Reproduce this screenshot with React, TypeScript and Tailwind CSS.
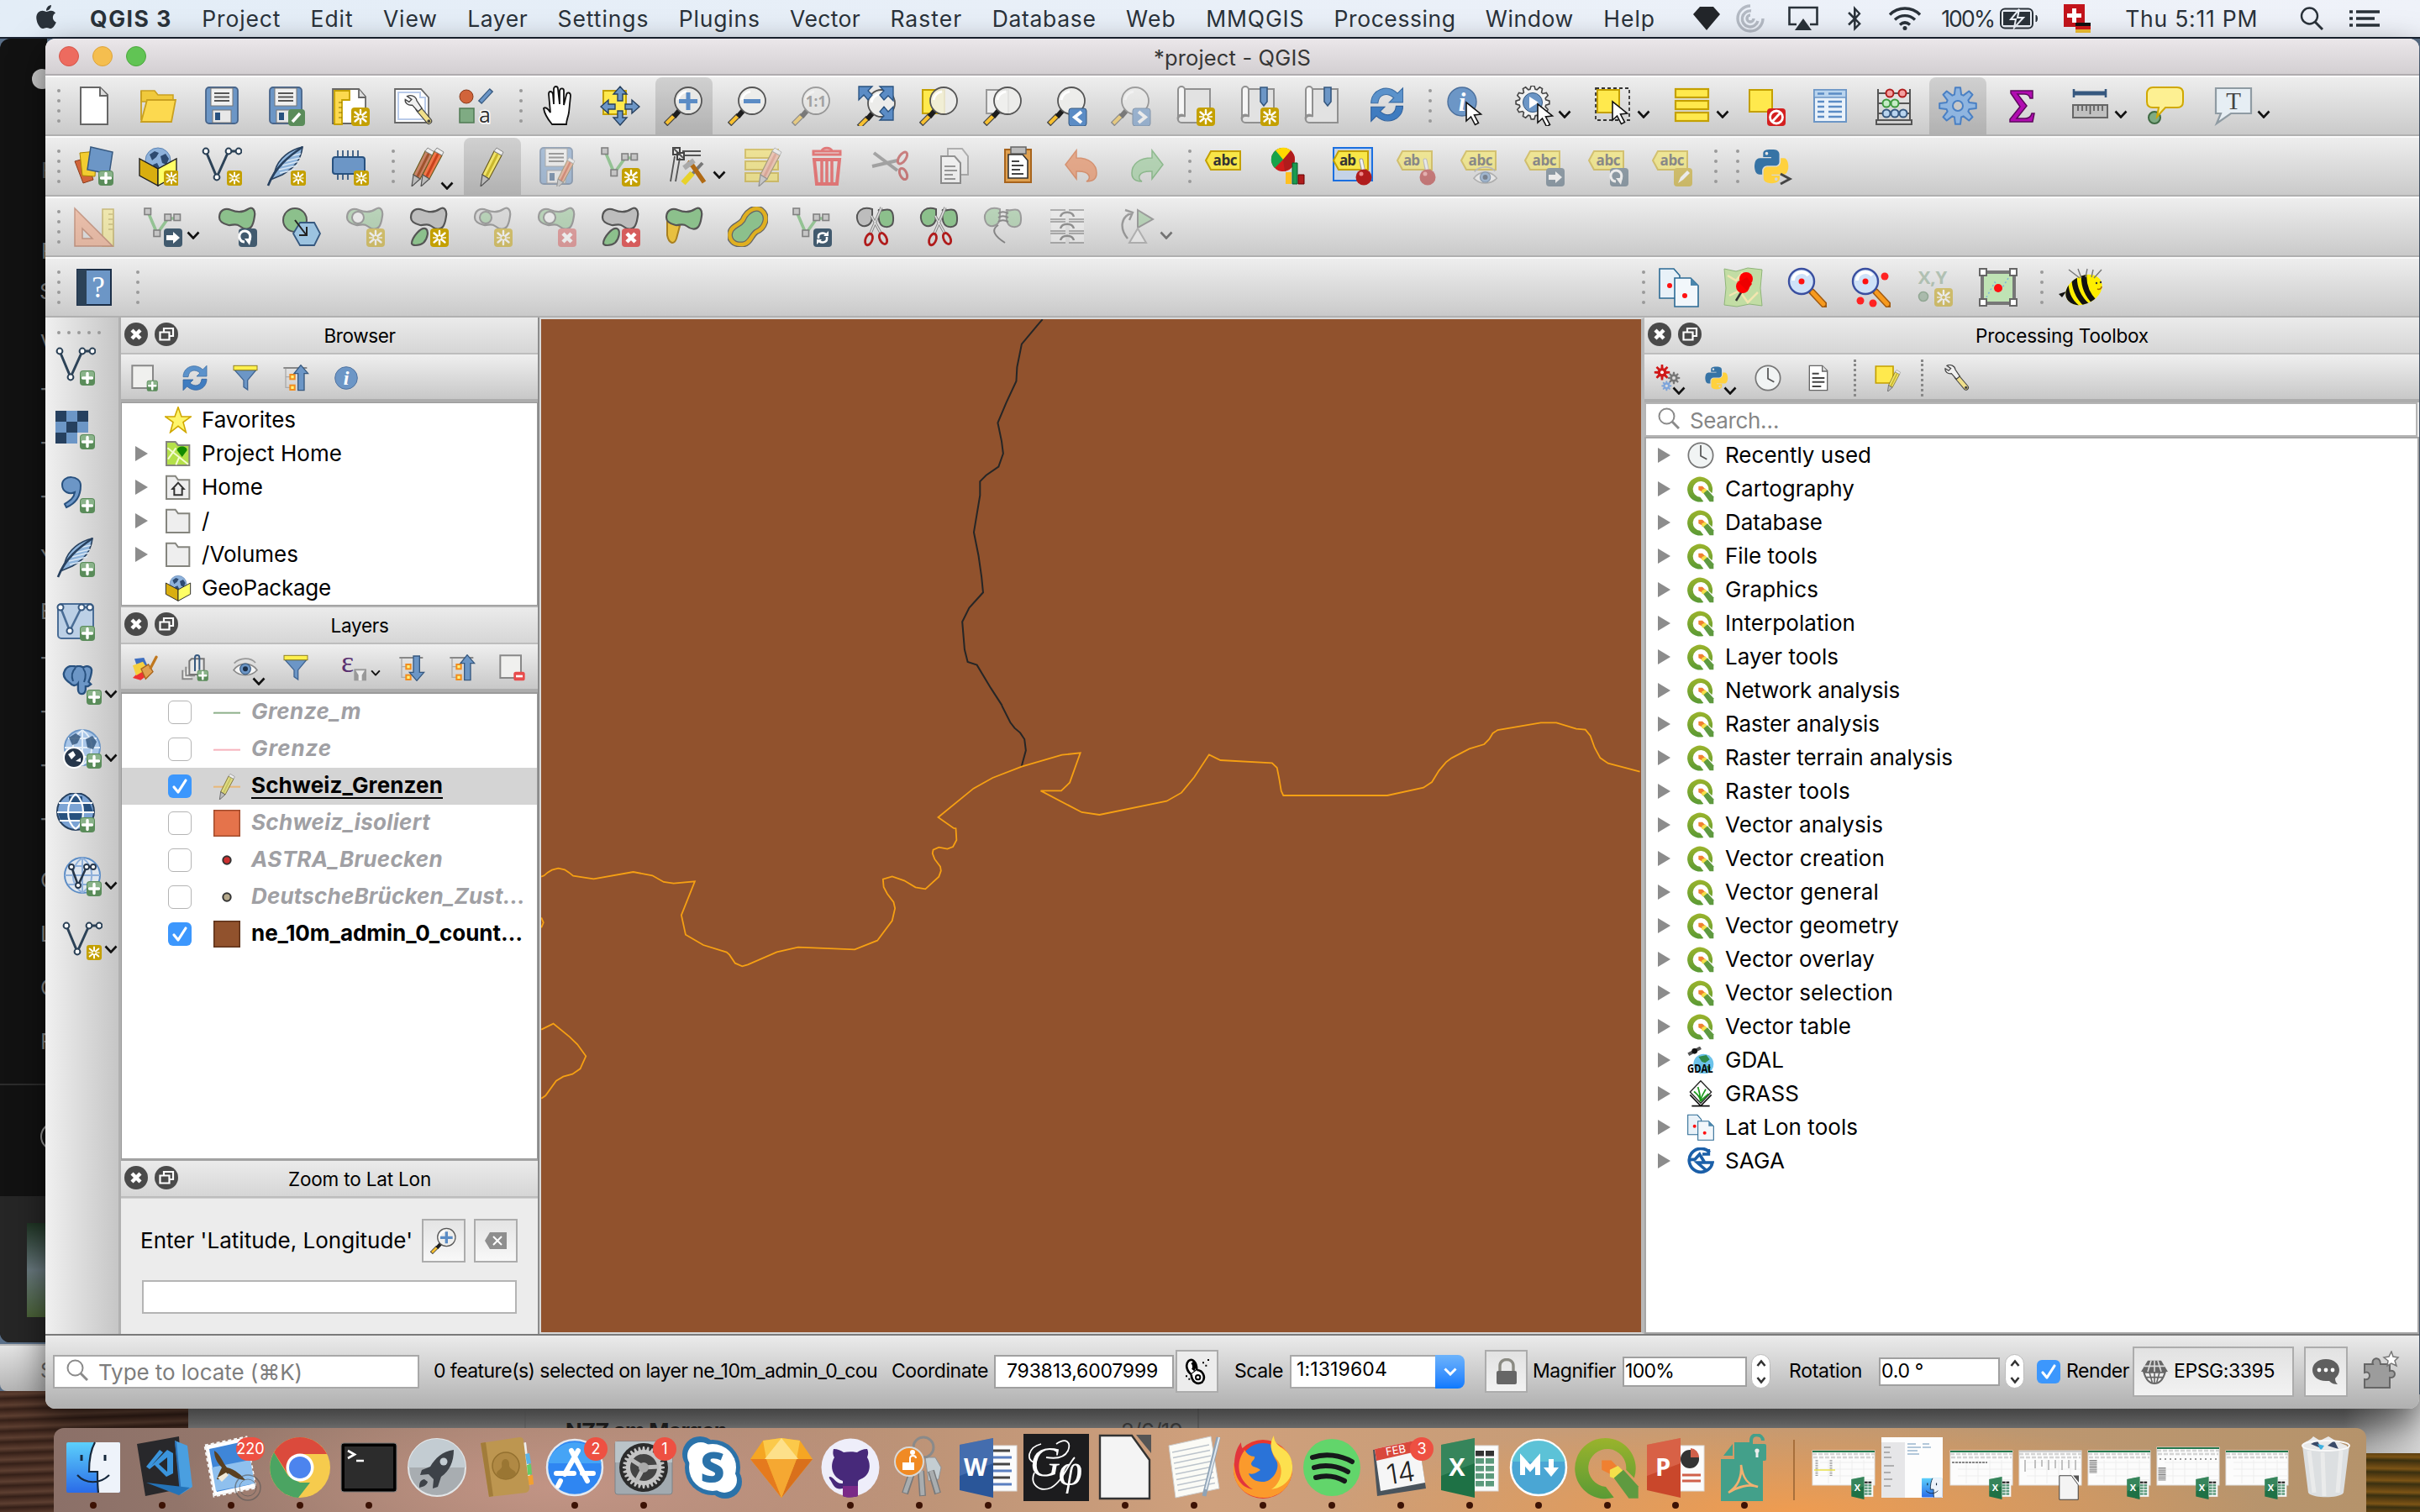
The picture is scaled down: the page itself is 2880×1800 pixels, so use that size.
import React, { useLayoutEffect, useRef } from "react";
import { FaApple, FaBluetoothB } from "react-icons/fa";

type Kids = { children?: React.ReactNode };

/* ---------- text fitted to a known advance width ---------- */
function Fit({ t, w, c = "" }: { t: string; w: number; c?: string }) {
  const ref = useRef<HTMLSpanElement>(null);
  useLayoutEffect(() => {
    const el = ref.current;
    if (!el) return;
    el.style.letterSpacing = "0px";
    const natural = el.getBoundingClientRect().width;
    el.style.letterSpacing = `${(w + 3 - natural) / t.length}px`;
  }, [t, w]);
  return (
    <span ref={ref} className={`inline-block shrink-0 whitespace-pre ${c}`}>
      {t}
    </span>
  );
}

/* ---------- icon primitives ---------- */
function Ico({ children, c = "size-12" }: Kids & { c?: string }) {
  return (
    <svg viewBox="0 0 48 48" className={`shrink-0 ${c}`} fill="none">
      {children}
    </svg>
  );
}

function gear(cx: number, cy: number, ro: number, ri: number, n: number) {
  const pts: string[] = [];
  for (let i = 0; i < n; i++) {
    const a = (i / n) * Math.PI * 2 - Math.PI / 2;
    const s = Math.PI / n;
    [[-0.75, ri], [-0.35, ro], [0.35, ro], [0.75, ri]].forEach(([k, r]) => {
      pts.push(`${(cx + r * Math.cos(a + k * s)).toFixed(2)},${(cy + r * Math.sin(a + k * s)).toFixed(2)}`);
    });
  }
  return pts.join(" ");
}

const Star = ({ x = 26, y = 26 }) => (
  <g transform={`translate(${x} ${y})`}>
    <rect width="22" height="22" rx="4" fill="#c4a000" />
    <path d="M11 3v16M4.5 5.5l13 11M4.5 16.5l13-11" stroke="#fff" strokeWidth="2.4" strokeLinecap="round" />
    <path d="M3 11h16" stroke="#fff" strokeWidth="1.4" />
    <circle cx="11" cy="11" r="2" fill="#c4a000" />
  </g>
);
const Plus = ({ x = 29, y = 29, s = 1 }) => (
  <g transform={`translate(${x} ${y}) scale(${s})`}>
    <rect width="18" height="18" rx="4" fill="#5a8c5a" />
    <rect x="1" y="1" width="16" height="8" rx="3" fill="#8ab38a" />
    <path d="M9 3.5v11M3.5 9h11" stroke="#fff" strokeWidth="3.4" strokeLinecap="round" />
  </g>
);
const Cross = () => (
  <g transform="translate(26 26)">
    <rect width="22" height="22" rx="4" fill="#d65c5c" />
    <path d="M6 6l10 10M16 6L6 16" stroke="#fff" strokeWidth="4.5" />
  </g>
);
const ArrowBadge = () => (
  <g transform="translate(26 26)">
    <rect width="22" height="22" rx="4" fill="#415a6e" />
    <path d="M3 8h8V4l8 7-8 7v-4H3z" fill="#fff" />
  </g>
);
const RotBadge = () => (
  <g transform="translate(26 26)">
    <rect width="22" height="22" rx="4" fill="#415a6e" />
    <path d="M7 16a6.500 6.500 0 1 1 5-2" stroke="#fff" strokeWidth="3" />
    <path d="M7 12h8l-2 8z" fill="#fff" />
  </g>
);
const SyncBadge = () => (
  <g transform="translate(26 26)">
    <rect width="22" height="22" rx="4" fill="#415a6e" />
    <path d="M6 12V9c0-3 6-5 9-2M16 10v3c0 3-6 5-9 2" stroke="#fff" strokeWidth="2.6" />
    <path d="M12 9h6V3zM10 13H4v6z" fill="#fff" />
  </g>
);
const Lens = ({ body, dim = false }: { body?: React.ReactNode; dim?: boolean }) => (
  <g opacity={dim ? 0.5 : 1}>
    <path d="M2 46l11-11" stroke="#444" strokeWidth="6.5" />
    <path d="M3 45l9-9" stroke="#f7c030" strokeWidth="4" />
    <path d="M12 37l7-8" stroke="#1d1d1d" strokeWidth="6" />
    <circle cx="29" cy="18" r="16" fill="#efefec" fillOpacity=".85" stroke="#555" strokeWidth="1.8" />
    <path d="M17 17a12 12 0 0 1 10-10" stroke="#fff" strokeWidth="3" />
    {body}
  </g>
);
const Pointer = ({ x = 22, y = 20 }) => (
  <path transform={`translate(${x} ${y})`} d="M1 1v22l5.5-5 5 9.5 4-2-5-9.5 8-1z" fill="#fff" stroke="#111" strokeWidth="1.6" />
);
const VNodes = ({ c = "#2c4257", soft = false }: { c?: string; soft?: boolean }) =>
  soft ? (
    <>
      <path d="M6 6l11 26L30 14h10" stroke="#8cc08c" strokeWidth="3.6" />
      {[[2, 2], [13, 28], [26, 9], [37, 9]].map(([x, y]) => (
        <rect key={x} x={x} y={y} width="7.5" height="7.5" fill="#c4c4c4" stroke="#777" strokeWidth="1.6" />
      ))}
    </>
  ) : (
    <>
      <path d="M5 6l13 31L32 6h12" stroke={c} strokeWidth="3" />
      {[[5, 6], [18, 37], [32, 6], [44, 6]].map(([x, y]) => (
        <circle key={x} cx={x} cy={y} r="3.4" fill="#fff" stroke={c} strokeWidth="2" />
      ))}
    </>
  );
const Floppy = () => (
  <>
    <rect x="5" y="2" width="38" height="43" rx="4" fill="#6c96c6" stroke="#47648a" strokeWidth="1.8" />
    <rect x="11" y="3" width="26" height="21" fill="#f0f0f0" stroke="#777" />
    <path d="M15 9h18M15 13.500h18M15 18h18" stroke="#555" strokeWidth="1.8" />
    <rect x="13" y="29" width="22" height="15" fill="#e8e8e8" stroke="#777" />
    <rect x="16" y="32" width="6" height="9" fill="#28517f" />
  </>
);
const Pencil = ({ x = 0, a = "#f0e36a", b = "#c9b72e", op = 1 }) => (
  <g transform={`translate(${x} 0)`} opacity={op}>
    <path d="M27 6l9 5-15 28-8-5z" fill={a} stroke="#6b5d20" strokeWidth="1.2" />
    <path d="M31.500 8.500l-14 28" stroke={b} strokeWidth="3" />
    <path d="M27 6l3-4 8 5-2 4z" fill="#eee" stroke="#888" strokeWidth="1" />
    <path d="M13 34l8 5-10 9z" fill="#bbb" stroke="#555" strokeWidth="1.2" />
  </g>
);
const Feather = () => (
  <>
    <path d="M44 1C30 4 15 14 11 30l-5 10 14-6c14-8 22-17 24-33z" fill="#8fb5dc" stroke="#28415f" strokeWidth="1.6" />
    <path d="M17 32l18-4M16 28l22-5M20 23l20-5M24 18l17-4M29 12l13-3" stroke="#dbe8f5" strokeWidth="1.3" />
    <path d="M44 1C28 12 12 24 3 47" stroke="#28415f" strokeWidth="2.6" />
  </>
);
const GeoBox = () => (
  <>
    <circle cx="24" cy="17" r="15" fill="#8db1da" stroke="#5e85b5" strokeWidth="1" />
    <path d="M14 10l6-4 5 2-3 5-5 4zM27 12l6-3 4 6-3 7-5-2zM18 22l5-2 3 6-4 5z" fill="#2d4a70" />
    <path d="M2 15v20l22 12V27z" fill="#d9ae10" stroke="#222" strokeWidth="1.4" />
    <path d="M46 15v20L24 47V27z" fill="#ffff66" stroke="#222" strokeWidth="1.4" />
  </>
);
const Caret = ({ c = "" }: { c?: string }) => (
  <svg viewBox="0 0 16 10" className={`h-[10px] w-4 shrink-0 ${c}`} fill="none">
    <path d="M1.500 1.500L8 8.500l6.500-7" stroke="#111" strokeWidth="2.6" />
  </svg>
);
const Refresh = () => (
  <>
    <path d="M3 22C3 4 24-4 38 9l7-7v19H27l6-6C24 7 13 10 12 22z" fill="#5b92cb" stroke="#3d6ea5" strokeWidth="1.2" />
    <path d="M45 26c0 18-21 26-35 13l-7 7V27h18l-6 6c9 8 20 5 21-7z" fill="#3f7cc0" stroke="#2f609c" strokeWidth="1.2" />
  </>
);
const Info = ({ x = 20, y = 19, r = 17 }) => (
  <g>
    <circle cx={x} cy={y} r={r} fill="#6c96c6" stroke="#4b6f9c" strokeWidth="1.4" />
    <text x={x} y={y + r * 0.62} textAnchor="middle" fontSize={r * 1.8} fontStyle="italic" fontWeight="700" fill="#fff" fontFamily="Liberation Serif, serif">i</text>
  </g>
);
const Tag = ({ t = "abc" }: { t?: string }) => (
  <g transform="translate(-2 0)">
    <path d="M3 17L9 6h35v22H9z" fill="#f8e648" stroke="#c4a000" strokeWidth="2" />
    <text x={t === "abc" ? 26 : 20} y="23" textAnchor="middle" fontSize="17" fontWeight="700" fill="#333" fontFamily="Open Sans, sans-serif" textLength={t === "abc" ? 29 : 20}>{t}</text>
  </g>
);
const Pin = ({ x = 0 }) => (
  <g transform={`translate(${x} 0)`}>
    <path d="M34 17l3 16" stroke="#999" strokeWidth="5" strokeLinecap="round" />
    <path d="M34 17l3 14" stroke="#f2f2f2" strokeWidth="3" strokeLinecap="round" />
    <circle cx="37" cy="37" r="9.500" fill="#b01c1c" />
    <circle cx="34" cy="33" r="2.500" fill="#e88" />
  </g>
);
const BLOB = "M3 13C3 4 10 1 17 4s14 3 20-1 9 2 8 8-1 9-4 13-9 3-14-1-9 0-13-1S3 19 3 13z";
const Blob = ({ f = "#8cc08c", s = "#555" }) => <path d={BLOB} fill={f} stroke={s} strokeWidth="2.2" />;
const Book = () => (
  <>
    <path d="M12 4h30v40H8a4 4 0 0 1 0-8h4z" fill="#e2e2e2" stroke="#909090" strokeWidth="2" />
    <path d="M4 5a4 4 0 0 1 8 0v32a4 4 0 0 0-8 4z" fill="#f6f6f6" stroke="#909090" strokeWidth="2" />
  </>
);
const Ribbon = () => <path d="M26 2h8v17l-4 5-4-5z" fill="#6c96c6" stroke="#36587f" strokeWidth="1.6" />;
const DocPair = () => (
  <>
    <path d="M1 2h17l7 8v27H1z" fill="#e8f1f8" stroke="#2b6a94" strokeWidth="1.6" />
    <circle cx="13" cy="22" r="3" fill="#f11" />
    <path d="M19 13h19l9 9v25H19z" fill="#f2f7fb" stroke="#2b6a94" strokeWidth="1.6" />
    <path d="M38 13v9h9z" fill="#4a86ad" />
    <circle cx="31" cy="34" r="3" fill="#f11" />
  </>
);
const BlueLens = () => (
  <>
    <path d="M30 29l15 16" stroke="#a05a10" strokeWidth="8" strokeLinecap="round" />
    <path d="M31 30l13 14" stroke="#f79a1e" strokeWidth="5" strokeLinecap="round" />
    <circle cx="18" cy="17" r="15" fill="#cfe2f8" stroke="#3a4fa0" strokeWidth="2.400" />
    <path d="M8 16a10 10 0 0 1 18-6" stroke="#fff" strokeWidth="4" />
    <circle cx="18" cy="17" r="3.500" fill="#f11" />
  </>
);
const Python = () => (
  <g transform="translate(2 1) scale(.09)">
    <path fill="#3673a5" d="M167.800 248.100h106.800c29.700 0 53.400-24.500 53.400-54.300V91.900c0-29-24.400-50.700-53.400-55.600-35.800-5.900-74.700-5.600-106.800.1-45.200 8-53.400 24.700-53.400 55.600v40.700h106.900v13.600h-147c-31.100 0-58.300 18.700-66.800 54.200-9.800 40.700-10.200 66.100 0 108.600 7.600 31.600 25.700 54.200 56.800 54.200H101v-48.800c0-35.300 30.500-66.400 66.800-66.400zm-6.700-142.600c-11.100 0-20.100-9.100-20.100-20.300.1-11.300 9-20.400 20.100-20.400 11 0 20.100 9.200 20.100 20.400s-9 20.300-20.100 20.300z" />
    <path fill="#ffd13e" d="M439.800 200.500c-7.700-30.900-22.300-54.200-53.400-54.200h-40.100v47.400c0 36.800-31.200 67.800-66.800 67.800H172.700c-29.200 0-53.400 25-53.400 54.300v101.800c0 29 25.200 46 53.400 54.300 33.800 9.900 66.300 11.700 106.800 0 26.900-7.800 53.400-23.500 53.400-54.300v-40.700H226.200v-13.600h160.200c31.100 0 42.600-21.700 53.400-54.200 11.200-33.500 10.700-65.700 0-108.600zM286.200 404c11.100 0 20.100 9.100 20.100 20.300 0 11.300-9 20.400-20.100 20.400-11 0-20.100-9.200-20.100-20.400.1-11.300 9.100-20.300 20.100-20.300z" />
  </g>
);
const Wrench = () => (
  <>
    <path d="M24 22l16 19" stroke="#444" strokeWidth="10" strokeLinecap="round" />
    <path d="M24 22l16 19" stroke="#f0df8a" strokeWidth="7" strokeLinecap="round" />
    <circle cx="40" cy="41" r="2.500" fill="#444" />
    <path d="M6 2c6-3 14 0 15 7l8 12-6 5-9-10C8 17 2 13 3 7l6 4 4-4z" fill="#f1f1f1" stroke="#444" strokeWidth="1.8" />
  </>
);
const Funnel = () => (
  <>
    <path d="M5 10h38L28 28v17l-7-5V28z" fill="#6c96c6" stroke="#3f6492" strokeWidth="2" />
    <rect x="3" y="2" width="42" height="8" fill="#fff04d" stroke="#8f8020" strokeWidth="1.5" />
  </>
);
const TreeBars = () => (
  <>
    <path d="M2 6h42" stroke="#888" strokeWidth="3" />
    <path d="M6 7v34h8M6 22h8" stroke="#aaa" strokeWidth="2" />
    <rect x="14" y="18" width="8" height="8" fill="#fff27a" stroke="#f28c1e" strokeWidth="3" />
    <rect x="14" y="37" width="8" height="8" fill="#fff27a" stroke="#f28c1e" strokeWidth="3" />
  </>
);
const CollapseI = () => (<><TreeBars /><path d="M33 1l13 15h-7v30H28V16h-7z" fill="#6c96c6" stroke="#36587f" strokeWidth="2" /></>);
const ExpandI = () => (<><TreeBars /><path d="M33 47L20 32h7V3h11v29h8z" fill="#6c96c6" stroke="#36587f" strokeWidth="2" /></>);
const Clock = () => (
  <>
    <circle cx="24" cy="24" r="22" fill="#f1f4f4" stroke="#777" strokeWidth="2.600" />
    <path d="M24 6v19l11 6" stroke="#555" strokeWidth="2.600" />
  </>
);
const QLogo = ({ id }: { id: string }) => (
  <>
    <defs>
      <linearGradient id={id} x1="0" y1="0" x2="0" y2="1">
        <stop offset="0" stopColor="#9ab32c" />
        <stop offset="1" stopColor="#5a9a35" />
      </linearGradient>
    </defs>
    <path d="M44 32A22.500 22.500 0 1 0 29 46.500l-6-8A14 14 0 1 1 38 26z" fill={`url(#${id})`} />
    <path d="M20 19h7l5 5v8l-4-2-8-4z" fill="#f08030" />
    <path d="M26 26l6-3 5 5-6 5-5-2z" fill="#f3e04a" />
    <path d="M29 32l7-6 11 12v9h-7z" fill="#5f9a40" />
  </>
);
const Globe = ({ f = "#7ba3d4", s = "#3c679b", l = "#e4eef8" }) => (
  <>
    <circle cx="24" cy="22" r="21" fill={f} stroke={s} strokeWidth="2" />
    <path d="M24 1v42M3 22h42M7 11h34M7 33h34M24 1C9 12 9 32 24 43M24 1c15 11 15 31 0 42" stroke={l} strokeWidth="2" />
  </>
);
const Eye = () => (
  <>
    <path d="M3 28C13 14 34 13 45 28 34 40 14 40 3 28z" fill="#f4f4f4" stroke="#888" strokeWidth="2.400" />
    <path d="M4 16C14 5 34 5 42 15" stroke="#999" strokeWidth="2.600" />
    <circle cx="24" cy="26" r="9.500" fill="#6c96c6" stroke="#36587f" strokeWidth="1.6" />
    <circle cx="24" cy="26" r="4.500" fill="#1c2f48" />
  </>
);
const Paper = ({ children }: Kids) => (
  <>
    <path d="M8 2h23l9 9v35H8z" fill="#fff" stroke="#666" strokeWidth="2" />
    <path d="M31 2v10h9" fill="#ddd" stroke="#666" strokeWidth="2" />
    {children}
  </>
);
const Scissors = ({ left }: { left: string }) => (
  <>
    <path d="M20 3C8-1 1 6 2 14s7 11 13 8 5-12 5-19z" fill={left} stroke="#555" strokeWidth="2" />
    <path d="M27 4c5 2 9-2 14 0s5 15 2 18-10 3-13-1-3-12-1-17z" fill="#8cc08c" stroke="#555" strokeWidth="2" />
    <path d="M31 1L17 34M19 11l12 22" stroke="#888" strokeWidth="3.400" />
    <path d="M31 1L17 34M19 11l12 22" stroke="#e4e4e4" strokeWidth="1.400" />
    <ellipse cx="16" cy="39" rx="4" ry="7" transform="rotate(20 16 39)" stroke="#b01c1c" strokeWidth="2.800" />
    <ellipse cx="33" cy="38" rx="4" ry="7" transform="rotate(-25 33 38)" stroke="#b01c1c" strokeWidth="2.800" />
  </>
);

/* ---------- toolbar pieces ---------- */
function Grip({ c = "w-[18px]" }: { c?: string }) {
  return (
    <div className={`flex h-full shrink-0 flex-col items-end justify-center gap-2 pr-[2px] ${c}`}>
      {[0, 1, 2, 3].map((i) => (
        <span key={i} className="size-1 rounded-full bg-[#9a9a9a]" />
      ))}
    </div>
  );
}
function Btn({ children, on = false, dim = false }: Kids & { on?: boolean; dim?: boolean }) {
  return (
    <div className="flex h-full w-[76px] shrink-0 items-center justify-center">
      <div className={`flex h-full w-[68px] items-center justify-center ${on ? "rounded-t-lg bg-black/12" : ""}`}>
        <Ico c={dim ? "size-12 opacity-50" : "size-12"}>{children}</Ico>
      </div>
    </div>
  );
}
function Drop({ children, dim = false }: Kids & { dim?: boolean }) {
  return (
    <div className={`flex h-full w-[94px] shrink-0 items-center pl-5 ${dim ? "opacity-50" : ""}`}>
      <Ico>{children}</Ico>
      <Caret c="ml-[4px] mt-5" />
    </div>
  );
}
function Bar({ children }: Kids) {
  return (
    <div className="flex h-[72px] shrink-0 items-stretch border-t-2 border-b-2 border-t-[#fafafa] border-b-[#b0b0b0] bg-linear-to-b from-[#eeeeee] to-[#cacaca]">
      {children}
    </div>
  );
}

function Toolbars() {
  return (
    <div className="flex shrink-0 flex-col">
      <Bar>
        <Grip c="w-5" />
        <Btn><Paper /></Btn>
        <Btn>
          <path d="M4 6h16l4 5h18v8H4z" fill="#f0c93c" stroke="#c9a020" strokeWidth="1.5" />
          <path d="M4 41V6M11 17h34l-5 26H4z" fill="#fcd94f" stroke="#c9a020" strokeWidth="1.800" />
        </Btn>
        <Btn><Floppy /></Btn>
        <Btn><Floppy /><rect x="27" y="28" width="20" height="20" rx="4" fill="#5a8c5a" /><path d="M32 43l9-10" stroke="#fff" strokeWidth="3.500" /></Btn>
        <Btn>
          <path d="M4 4h31l8 9v32H4z" fill="#fff" stroke="#666" strokeWidth="1.800" /><path d="M35 4v10h8" fill="#ddd" stroke="#666" strokeWidth="1.8" />
          <path d="M6 6h18v11h-9v29H6z" fill="#fcd94f" stroke="#c4a000" strokeWidth="1.800" />
          <path d="M11 20h4M11 26h4M11 32h4M11 38h4" stroke="#8a7000" /><Star />
        </Btn>
        <Btn>
          <path d="M2 4h31l9 10v30H2z" fill="#fff" stroke="#666" strokeWidth="1.800" />
          <path d="M6 8h26v6h6v26H6z" stroke="#b9cbea" strokeWidth="2" />
          <g transform="translate(12 11) scale(.76)"><Wrench /></g>
        </Btn>
        <Btn>
          <circle cx="11" cy="13" r="8" fill="#d1643a" stroke="#8a3c1c" />
          <path d="M41 5L27 20" stroke="#36587f" strokeWidth="6" /><path d="M40 6L28 19" stroke="#6c96c6" strokeWidth="3.500" />
          <rect x="3" y="27" width="17" height="17" fill="#7fab83" stroke="#4f7a53" strokeWidth="1.500" />
          <text x="26" y="44" fontSize="25" fill="#333" stroke="#fff" strokeWidth="3" paintOrder="stroke" fontFamily="Open Sans, sans-serif">a</text>
        </Btn>
        <Grip />
        <Btn>
          <path transform="translate(5 0)" d="M14 46c-5-6-9-12-10-19 2-2 5 0 8 5L10 10c0-4 4-4 5 0l1 12V4c0-4 5-4 5 0l2 18V6c1-4 5-3 5 0v17l3-12c1-4 5-3 5 1l-2 20c-1 6-3 9-3 14z" fill="#fff" stroke="#111" strokeWidth="1.800" />
        </Btn>
        <Btn>
          <rect x="4" y="6" width="27" height="28" fill="#ffe94d" stroke="#c4a000" strokeWidth="2" />
          <path d="M24 1l8 9h-5v8h-6v-8h-5zM24 47l8-9h-5v-8h-6v8h-5zM1 25l9-8v5h8v6h-8v5zM47 25l-9-8v5h-8v6h8v5z" fill="#6c96c6" stroke="#28415f" strokeWidth="1.400" />
        </Btn>
        <Btn on><Lens body={<path d="M29 8v21M18 18.500h22" stroke="#5b8cc5" strokeWidth="5" />} /></Btn>
        <Btn><Lens body={<path d="M19 18.500h20" stroke="#5b8cc5" strokeWidth="5" />} /></Btn>
        <Btn><Lens dim body={<text x="29" y="25" textAnchor="middle" fontSize="17" fontWeight="700" fill="#666" fontFamily="Open Sans, sans-serif">1:1</text>} /></Btn>
        <Btn>
          <g transform="translate(2 3)"><Lens /></g>
          <path d="M4 1h16l-5 5 5 5-5 6-5-6-6 6zM45 1v17l-6-6-5 5-5-6 5-5-5-5zM45 41H29l5-5-5-5 5-6 5 6 6-6z" fill="#5b8cc5" stroke="#28517f" strokeWidth="1.300" />
        </Btn>
        <Btn><rect x="4" y="5" width="26" height="28" fill="#ffe94d" stroke="#c4a000" strokeWidth="2" /><Lens /></Btn>
        <Btn><rect x="4" y="5" width="26" height="28" fill="#eee" stroke="#999" strokeWidth="2" /><Lens /></Btn>
        <Btn><Lens /><rect x="26" y="27" width="21" height="21" rx="3" fill="#5b8cc5" stroke="#36587f" /><path d="M41 31l-8 6.500 8 6.500" stroke="#fff" strokeWidth="4" /></Btn>
        <Btn dim><Lens /><rect x="26" y="27" width="21" height="21" rx="3" fill="#5b8cc5" stroke="#36587f" /><path d="M33 31l8 6.500-8 6.500" stroke="#fff" strokeWidth="4" /></Btn>
        <Btn><Book /><Star /></Btn>
        <Btn><Book /><Ribbon /><Star /></Btn>
        <Btn><Book /><Ribbon /></Btn>
        <Btn><g transform="translate(3 1) scale(.9)"><Refresh /></g></Btn>
        <Grip />
        <Btn><Info /><Pointer x={24} y={19} /></Btn>
        <Drop>
          <polygon points={gear(22, 20, 20, 16, 12)} fill="#f2f2f2" stroke="#444" strokeWidth="1.600" />
          <circle cx="22" cy="20" r="11.500" fill="#6c96c6" stroke="#36587f" /><path d="M18 13l11 7-11 7z" fill="#fff" /><Pointer x={27} y={21} />
        </Drop>
        <Drop>
          <rect x="3" y="3" width="40" height="38" stroke="#333" strokeWidth="1.800" strokeDasharray="4 3" />
          <rect x="5" y="5" width="26" height="27" fill="#ffe94d" stroke="#c4a000" strokeWidth="2" /><Pointer x={22} y={18} />
        </Drop>
        <Drop>
          {[4, 18, 32].map((y) => <rect key={y} x="4" y={y} width="39" height="10" fill="#ffe94d" stroke="#c4a000" strokeWidth="2.200" />)}
        </Drop>
        <Btn>
          <rect x="4" y="5" width="27" height="26" fill="#ffe94d" stroke="#c4a000" strokeWidth="2" />
          <rect x="25" y="27" width="22" height="21" rx="4" fill="#d42020" /><circle cx="36" cy="37.500" r="7.500" stroke="#fff" strokeWidth="2.800" /><path d="M31 43l10-11" stroke="#fff" strokeWidth="2.800" />
        </Btn>
        <Btn>
          <rect x="5" y="5" width="38" height="38" fill="#eaf2fa" stroke="#6c96c6" strokeWidth="2" /><rect x="5" y="5" width="38" height="9" fill="#b9d4ee" stroke="#6c96c6" strokeWidth="1.500" />
          <path d="M9 9.500h8M22 9.500h16M9 19h8M22 19h16M9 25h8M22 25h16M9 31h8M22 31h16M9 37h8M22 37h16" stroke="#5b8cc5" strokeWidth="2.400" />
        </Btn>
        <Btn>
          <path d="M5 4v37M43 4v37M5 9h38M5 21h38M5 33h38M3 41h42v5H3z" stroke="#555" strokeWidth="2" />
          {[[19, 9, "#f3a0a0", "#b01c1c"], [34, 9, "#f3a0a0", "#b01c1c"], [15, 21, "#c6ecc6", "#3f9a3f"], [25, 21, "#c6ecc6", "#3f9a3f"], [15, 33, "#b9d4ee", "#36587f"], [25, 33, "#b9d4ee", "#36587f"], [35, 33, "#b9d4ee", "#36587f"]].map(([x, y, f, s]) => (
            <circle key={`${x}-${y}`} cx={x} cy={y} r="4.500" fill={String(f)} stroke={String(s)} strokeWidth="2" />
          ))}
        </Btn>
        <Btn on>
          <polygon points={gear(24, 24, 22, 14, 8)} fill="#8fb5e0" stroke="#4a80c4" strokeWidth="2" strokeLinejoin="round" />
          <circle cx="24" cy="24" r="6" fill="#c8c8c8" stroke="#4a80c4" strokeWidth="2" />
        </Btn>
        <Btn><path d="M11 6h26v9h-3c-1-4-3-5-7-5H19l11 14-12 15h10c5 0 7-2 8-6h3l-2 10H10v-3l12-15L11 9z" fill="#b10cb1" stroke="#5e085e" strokeWidth="1.500" /></Btn>
        <Drop>
          <path d="M4 9h38M4 4v10M42 4v10" stroke="#36587f" strokeWidth="2.600" /><path d="M5 9h36" stroke="#36587f" strokeWidth="5" />
          <rect x="3" y="23" width="41" height="15" fill="#c0c0c0" stroke="#666" strokeWidth="2" /><path d="M9 24v6M14 24v6M19 24v6M23.500 24v10M28 24v6M33 24v6M38 24v6" stroke="#555" strokeWidth="1.600" />
        </Drop>
        <Btn>
          <circle cx="12" cy="38" r="7" fill="#7fab83" stroke="#3f6a43" strokeWidth="2" />
          <path d="M10 2h29c5 0 7 3 7 7v10c0 5-3 7-7 7H25L15 37l2-11h-7c-5 0-7-3-7-7V9c0-4 3-7 7-7z" fill="#fdf092" stroke="#d0a800" strokeWidth="2" />
        </Btn>
        <Drop>
          <path d="M3 3h42v30H21L4 45l5-12H3z" fill="#e6eef4" stroke="#8f9ba3" strokeWidth="2.200" />
          <text x="24" y="28" textAnchor="middle" fontSize="29" fill="#444" fontFamily="Liberation Serif, serif">T</text>
        </Drop>
      </Bar>
      <Bar>
        <Grip c="w-5" />
        <Btn>
          <path d="M1 18l14-4 8 26-12 4z" fill="#d1643a" stroke="#8a3c1c" /><path d="M7 8l20-2-2 30-15-1z" fill="#f2cc30" stroke="#a88400" />
          <path d="M20 1l26 6-4 26-26-5z" fill="#6c96c6" stroke="#36587f" strokeWidth="1.500" /><Plus />
        </Btn>
        <Btn><GeoBox /><g transform="translate(31 29) scale(.82)"><Star x={0} y={0} /></g></Btn>
        <Btn><VNodes /><g transform="translate(30 29) scale(.82)"><Star x={0} y={0} /></g></Btn>
        <Btn><Feather /><g transform="translate(30 29) scale(.82)"><Star x={0} y={0} /></g></Btn>
        <Btn>
          <path d="M10 5v9M16 5v9M22 5v9M28 5v9M34 5v9M10 33v7M16 33v7M22 33v7" stroke="#36587f" strokeWidth="1.800" />
          <rect x="4" y="13" width="38" height="20" rx="3" fill="#6c96c6" stroke="#28517f" strokeWidth="2" /><g transform="translate(29 29) scale(.82)"><Star x={0} y={0} /></g>
        </Btn>
        <Grip />
        <div className="flex h-full w-[76px] shrink-0 items-center pl-4">
          <Ico><Pencil x={-9} a="#c88468" b="#a0522d" /><Pencil x={2} a="#f0764a" b="#c8421c" /></Ico>
          <Caret c="-ml-[12px] mt-[46px]" />
        </div>
        <Btn on><Pencil x={-1} /></Btn>
        <Btn dim><Floppy /><g transform="translate(14 12) scale(.8)"><Pencil x={2} a="#e8906a" b="#c8421c" /></g></Btn>
        <Btn><g opacity=".9"><VNodes soft /></g><Star /></Btn>
        <Drop>
          <rect x="5" y="2" width="8" height="8" stroke="#444" strokeWidth="2" /><path d="M5 2l12 12M16 6h22M18 11h20M7 12L2 42M13 14L8 42" stroke="#555" strokeWidth="1.800" />
          <rect x="10" y="8" width="8" height="8" stroke="#444" strokeWidth="2" /><path d="M40 20L18 44" stroke="#777" strokeWidth="4" /><path d="M28 32L17 44" stroke="#e8d22a" strokeWidth="7" />
          <path d="M22 19l6 4 14 20" stroke="#b06a14" strokeWidth="5.500" /><path d="M18 26l12-9" stroke="#aaa" strokeWidth="6" />
        </Drop>
        <Btn dim>
          {[4, 18, 32].map((y) => <rect key={y} x="3" y={y} width="39" height="10" fill="#f6e048" stroke="#c4a000" strokeWidth="2" />)}
          <Pencil x={8} a="#f0a888" b="#d8765a" />
        </Btn>
        <Btn>
          <g opacity=".85"><path d="M8 6h32v4H8zM18 6c0-5 12-5 12 0" stroke="#e06666" strokeWidth="3" /><path d="M9 16h30l-3 29H12z" stroke="#e06666" strokeWidth="4" /><path d="M18 18v26M24 18v26M30 18v26" stroke="#e06666" strokeWidth="3.500" /></g>
        </Btn>
        <Btn dim>
          <path d="M4 8l28 21M2 24l30-7" stroke="#666" strokeWidth="4" /><ellipse cx="38" cy="14" rx="4" ry="8" transform="rotate(35 38 14)" stroke="#b01c1c" strokeWidth="3" /><ellipse cx="39" cy="33" rx="4" ry="7" transform="rotate(-25 39 33)" stroke="#b01c1c" strokeWidth="3" />
        </Btn>
        <Btn dim>
          <path d="M16 3h17l7 9v22H16z" fill="#eee" stroke="#777" strokeWidth="2" /><path d="M8 12h16l7 8v24H8z" fill="#fff" stroke="#444" strokeWidth="2" /><path d="M12 24h13M12 29h15M12 34h10M12 39h13" stroke="#555" strokeWidth="2" />
        </Btn>
        <Btn>
          <rect x="8" y="4" width="31" height="39" fill="#dfa050" stroke="#a8641c" strokeWidth="2" /><rect x="15" y="1" width="18" height="8" fill="#bbb" stroke="#666" strokeWidth="1.500" />
          <path d="M12 10h17l6 7v21H12z" fill="#fff" stroke="#333" strokeWidth="1.600" /><path d="M16 18h9M16 23h14M16 28h10M16 33h14" stroke="#444" strokeWidth="2" />
        </Btn>
        <Btn><g opacity=".65"><path d="M4 22L17 5v9c16 0 24 8 24 18 0 8-6 10-12 10 6-3 5-13-12-12v9z" fill="#e58a5c" stroke="#d06a38" strokeWidth="1.500" /></g></Btn>
        <Btn><g opacity=".65"><path d="M44 22L31 5v9C15 14 7 22 7 32c0 8 6 10 12 10-6-3-5-13 12-12v9z" fill="#9ccb9c" stroke="#63a563" strokeWidth="1.500" /></g></Btn>
        <Grip />
        <Btn><Tag /></Btn>
        <Btn>
          <circle cx="17" cy="16" r="14" fill="#d01c1c" /><path d="M17 16V2A14 14 0 0 0 7 26z" fill="#18a34a" /><path d="M17 16L8 5a14 14 0 0 1 19 1z" fill="#ffd800" /><path d="M17 16l9-11a14 14 0 0 1 0 21l-7 4z" fill="#b01c1c" />
          <path d="M20 31h7v14h-7z" fill="#ffc020" /><path d="M28 20h6v25h-6z" fill="#1a9a50" stroke="#0a5a2c" /><path d="M35 34h7v11h-7z" fill="#b01c1c" stroke="#600" />
        </Btn>
        <Btn><rect x="1" y="2" width="46" height="39" fill="#c5d3e6" stroke="#1a6fe0" strokeWidth="2" /><Tag t="ab" /><Pin /></Btn>
        <Btn dim><Tag t="ab" /><Pin /></Btn>
        <Btn dim><Tag /><g transform="translate(14 20) scale(.65)"><Eye /></g></Btn>
        <Btn dim><Tag /><ArrowBadge /></Btn>
        <Btn dim><Tag /><RotBadge /></Btn>
        <Btn dim><Tag /><rect x="26" y="26" width="22" height="22" rx="4" fill="#c4a000" /><path d="M31 44l3-7 8-8 3 3-8 8z" fill="#fff" /></Btn>
        <Grip />
        <Grip c="w-[26px]" />
        <Btn><Python /><path d="M33 33l11 6-11 6" stroke="#444" strokeWidth="3" /></Btn>
      </Bar>
      <Bar>
        <Grip c="w-5" />
        <Btn dim><path d="M34 3h13v44H34z" fill="#f8e878" stroke="#a88a10" strokeWidth="1.500" /><path d="M41 9h5M41 15h5M41 21h5M41 27h5" stroke="#8a7000" /><path d="M1 2v45h45zM10 26v12h12z" fill="#ef9a72" fillRule="evenodd" stroke="#a8502c" strokeWidth="1.500" /></Btn>
        <Drop><g opacity=".9"><VNodes soft /></g><g transform="translate(-1 0)"><ArrowBadge /></g></Drop>
        <Btn><Blob /><RotBadge /></Btn>
        <Btn>
          <circle cx="17" cy="16" r="14" fill="#8cc08c" stroke="#555" strokeWidth="2" /><path d="M23 19h17l7 13-7 14H23l-8-14z" fill="#9cc3e0" stroke="#36587f" strokeWidth="1.800" /><path d="M17 16l13 17M31 24v10h-9" stroke="#222" strokeWidth="2" />
        </Btn>
        <Btn dim><Blob /><circle cx="16" cy="13" r="7" fill="#eee" stroke="#555" strokeWidth="2" /><Star /></Btn>
        <Btn><Blob f="#bdbdbd" /><path d="M20 26c5 2 3 12-2 17-5 4-15 4-14 0 1-7 10-18 16-17z" fill="#8cc08c" stroke="#555" strokeWidth="2.200" /><Star /></Btn>
        <Btn dim><Blob f="#ccc" /><circle cx="16" cy="13" r="7" fill="#8cc08c" stroke="#555" strokeWidth="2" /><Star /></Btn>
        <Btn dim><Blob /><circle cx="16" cy="13" r="7" fill="#eee" stroke="#555" strokeWidth="2" /><Cross /></Btn>
        <Btn><Blob f="#bdbdbd" /><path d="M20 26c5 2 3 12-2 17-5 4-15 4-14 0 1-7 10-18 16-17z" fill="#8cc08c" stroke="#555" strokeWidth="2.200" /><Cross /></Btn>
        <Btn><path d="M4 16v18c2 10 8 12 11 4l4-15z" fill="#e8c040" stroke="#a88020" strokeWidth="2" /><Blob /></Btn>
        <Btn><path d="M40 4c10 8 4 22-6 26-6 4-7 14-16 15C4 46 0 36 4 28c3-6 10-6 14-12C22 6 32-1 40 4z" fill="#8cc08c" stroke="#666" strokeWidth="7" /><path d="M40 4c10 8 4 22-6 26-6 4-7 14-16 15C4 46 0 36 4 28c3-6 10-6 14-12C22 6 32-1 40 4z" stroke="#e0b020" strokeWidth="4.500" /></Btn>
        <Btn><g opacity=".9"><VNodes soft /></g><SyncBadge /></Btn>
        <Btn><Scissors left="#bdbdbd" /></Btn>
        <Btn><Scissors left="#8cc08c" /></Btn>
        <Btn dim><path d="M20 3C8-1 1 6 2 14s7 11 13 8 5-12 5-19z" fill="#8cc08c" stroke="#555" strokeWidth="2" /><path d="M27 4c5 2 9-2 14 0s5 15 2 18-10 3-13-1-3-12-1-17z" fill="#8cc08c" stroke="#555" strokeWidth="2" /><path d="M18 8c3-2 8-2 12 0M18 13c3-2 8-2 12 0M18 18c3-2 8-2 12 0M18 22c-10 6-3 14 8 21" stroke="#333" strokeWidth="2" /></Btn>
        <Btn dim>{[4, 18, 32].map((y) => <g key={y}><rect x="5" y={y} width="17" height="11" fill="#eee" /><rect x="27" y={y} width="17" height="11" fill="#eee" /><path d={`M4 ${y}h18M26 ${y}h18M4 ${y + 11}h18M26 ${y + 11}h18`} stroke="#777" strokeWidth="2" /><path d={`M16 ${y + 8}c2-7 14-7 16 0`} stroke="#444" strokeWidth="2.500" /></g>)}</Btn>
        <Drop dim><g transform="translate(2 0)"><path d="M12 38C2 26 4 12 16 8M9 4l9 3-4 9" stroke="#555" strokeWidth="2.400" /><path d="M24 4l18 11-18 10z" fill="#8cc08c" stroke="#555" strokeWidth="2" /><path d="M24 26l10 17H14z" fill="#eee" stroke="#888" strokeWidth="2" /></g></Drop>
      </Bar>
      <Bar>
        <Grip c="w-5" />
        <Btn>
          <rect x="4" y="3" width="40" height="42" fill="#6c96c6" stroke="#1c2f48" strokeWidth="2" /><path d="M4 3h11v42H4z" fill="#2c4257" />
          <text x="29" y="36" textAnchor="middle" fontSize="35" fill="#fff" fontFamily="Liberation Serif, serif">?</text>
        </Btn>
        <Grip />
        <div className="w-[1774px] shrink-0" />
        <Grip />
        <Btn><DocPair /></Btn>
        <Btn>
          <path d="M2 2l14 3 14-4 17 2-2 22 2 21-15-2-15 3L2 45l2-20z" fill="#c2dda4" stroke="#8fb57a" /><path d="M6 10l10 6 8-10M8 34l12-6 10 14 12-12" stroke="#f3e6b0" strokeWidth="2.500" />
          <path d="M24 27l-8 13" stroke="#333" strokeWidth="2.500" /><circle cx="28" cy="14" r="8" fill="#f00" /><circle cx="24" cy="23" r="8" fill="#f00" /><path d="M19 18l10-6 6 8-6 8z" fill="#e00" />
        </Btn>
        <Btn><BlueLens /></Btn>
        <Btn><BlueLens />{[[41, 11], [12, 40], [27, 43]].map(([x, y]) => <circle key={x} cx={x} cy={y} r="4.500" fill="#f22" />)}</Btn>
        <Btn dim>
          <text x="22" y="20" textAnchor="middle" fontSize="22" fontWeight="700" fill="#7f9f83" fontFamily="Open Sans, sans-serif">X,Y</text>
          <circle cx="11" cy="35" r="5.500" fill="#7f9f83" stroke="#4f7a53" strokeWidth="1.500" /><Star x={24} y={25} />
        </Btn>
        <Btn>
          <rect x="5" y="6" width="38" height="37" fill="#bfe3b4" stroke="#777" strokeWidth="4" /><path d="M10 36l10-18 8 8 10-16" stroke="#7ab3dd" strokeWidth="1.500" strokeDasharray="2 3" />
          {[[2, 2], [38, 2], [2, 38], [38, 38]].map(([x, y]) => <rect key={`${x}${y}`} x={x} y={y} width="8" height="8" fill="#fff" stroke="#666" strokeWidth="2" />)}
          <circle cx="24" cy="25" r="5" fill="#f11" />
        </Btn>
        <Grip />
        <div className="flex h-full w-[84px] items-center justify-center">
          <svg viewBox="0 0 54 48" className="h-12 w-[54px]" fill="none">
            <defs><clipPath id="beeBody"><ellipse cx="31" cy="27" rx="23" ry="16.500" transform="rotate(-28 31 27)" /></clipPath></defs>
            <path d="M1 32l9-3-5 7z" fill="#111" />
            <g clipPath="url(#beeBody)"><rect width="54" height="48" fill="#ffee00" /><path d="M9 14c0 16 4 26 14 34M20 6c-2 16 4 30 15 40M32 2c-3 16 2 30 12 40" stroke="#111" strokeWidth="6.500" /></g>
            <path d="M26 13L13 3M28 13L24 2M33 12l2-10M40 12l2-9M43 13l9-10" stroke="#777" strokeWidth="1.400" />
            <path d="M47 26c2 1 5 0 5-3" stroke="#a60" strokeWidth="1.500" /><circle cx="46" cy="19" r="1.200" fill="#333" /><circle cx="51" cy="18" r="1.200" fill="#333" />
          </svg>
        </div>
      </Bar>
    </div>
  );
}

/* ---------- left side layer toolbar ---------- */
function SideBtn({ children, drop = false }: Kids & { drop?: boolean }) {
  return (
    <div className={`flex h-[76px] shrink-0 items-center ${drop ? "pl-5" : "pl-3"}`}>
      <Ico>{children}</Ico>
      {drop && <Caret c="ml-[2px] mt-5" />}
    </div>
  );
}
function SideBar() {
  return (
    <div className="flex w-[90px] shrink-0 flex-col border-r-[3px] border-[#b0b0b0] bg-linear-to-r from-[#f0f0f0] to-[#c6c6c6]">
      <div className="flex h-[20px] shrink-0 items-end gap-2 pl-[14px]">
        {[0, 1, 2, 3, 4].map((i) => <span key={i} className="size-1 rounded-full bg-[#9a9a9a]" />)}
      </div>
      <SideBtn><VNodes /><Plus /></SideBtn>
      <SideBtn>
        {[0, 1, 2].map((r) => [0, 1, 2].map((k) => (r === 2 && k === 2 ? null : <rect key={`${r}${k}`} x={k * 13} y={r * 13 + 1} width="13" height="13" fill={(r + k) % 2 ? "#6c96c6" : "#26405f"} />)))}
        <Plus />
      </SideBtn>
      <SideBtn><path d="M30 14C30 1 8 1 8 13c0 9 9 12 15 9-1 7-6 10-12 14l2 4c12-5 17-14 17-26z" fill="#6c96c6" stroke="#28517f" strokeWidth="2" /><Plus /></SideBtn>
      <SideBtn><Feather /><Plus /></SideBtn>
      <SideBtn>
        <rect x="3" y="3" width="42" height="41" rx="4" fill="#bcd0e6" stroke="#4a6d96" strokeWidth="2" />
        <path d="M6 7l11 28L31 7h11" stroke="#4a6d96" strokeWidth="2.600" />
        {[[6, 7], [17, 35], [31, 7], [41, 7]].map(([x, y]) => <circle key={x} cx={x} cy={y} r="3.500" fill="#fff" stroke="#36587f" strokeWidth="2" />)}
        <Plus />
      </SideBtn>
      <SideBtn drop>
        <path d="M3 8C6 0 14 0 18 2c4-2 7-1 10 1 4-3 10-2 11 3 0 6-2 11-4 16l3 3-4 3h-3v4c-1 8-10 8-10 0v-8c-3 4-8 3-10 0C5 20 0 14 3 8z" transform="scale(.9)" fill="#6c96c6" stroke="#28517f" strokeWidth="2.600" />
        <path d="M16 3c-5 5-5 11-3 16M25 4c4 5 3 11 1 16" stroke="#28517f" strokeWidth="2" /><Plus />
      </SideBtn>
      <SideBtn drop>
        <Globe f="#a9c6e8" s="#6c96c6" /><path d="M8 10l8-5 6 4-4 8-6 2zM28 12l8-4 5 7-4 9-7-2z" fill="#36587f" opacity=".85" />
        <circle cx="14" cy="34" r="12" fill="#26364a" stroke="#fff" strokeWidth="2" /><path d="M7 30l6-4 3 5-5 5zM16 38l6-4v5z" fill="#fff" /><Plus />
      </SideBtn>
      <SideBtn>
        <circle cx="24" cy="22" r="22" fill="#7ba3d4" stroke="#26405f" strokeWidth="2" /><path d="M16 12h16l2 11H14zM4 12h12l-2 11H3zM14 23h20l-2 10H16z" fill="#28517f" opacity=".0" /><path d="M16 12h16V4H16zM16 23h16v10H16zM3 23h13v10H6zM32 12h9l4 11H32zM4 12l-2 0z" fill="#28517f" /><path d="M4 12h40M2 23h44M5 33h38M24 1C12 12 12 34 24 43M24 1c12 11 12 33 0 42" stroke="#fff" strokeWidth="2.200" /><Plus />
      </SideBtn>
      <SideBtn drop><Globe f="#dfe6ee" s="#5b8cc5" l="#8fb0da" /><path d="M11 12l8 22L29 12h8" stroke="#26364a" strokeWidth="2.600" />{[[11, 12], [19, 34], [29, 12], [37, 12]].map(([x, y]) => <circle key={x} cx={x} cy={y} r="3" fill="#fff" stroke="#26364a" strokeWidth="1.800" />)}<Plus /></SideBtn>
      <SideBtn drop><VNodes /><g transform="translate(29 29) scale(.82)"><Star x={0} y={0} /></g></SideBtn>
    </div>
  );
}

/* ---------- dock panels ---------- */
function Head({ t, w }: { t: string; w: number }) {
  return (
    <div className="flex h-[44px] shrink-0 items-center border-b-2 border-[#bdbdbd] bg-linear-to-b from-[#ebebeb] to-[#d6d6d6] pl-1">
      <svg viewBox="0 0 28 28" className="mb-[2px] size-7 shrink-0"><circle cx="14" cy="14" r="14" fill="#4a4a4a" /><path d="M9 9l10 10M19 9L9 19" stroke="#fff" strokeWidth="4.400" /></svg>
      <svg viewBox="0 0 28 28" className="mb-[2px] ml-2 size-7 shrink-0" fill="none"><circle cx="14" cy="14" r="14" fill="#4a4a4a" /><path d="M11 11V7h11v9h-4M6.500 11.500h11v9h-11z" stroke="#fff" strokeWidth="2.200" /></svg>
      <div className="flex flex-1 justify-center pt-[2px] pl-1 text-[22.500px] leading-none text-black"><Fit t={t} w={w} /></div>
    </div>
  );
}
function MiniBar({ children }: Kids) {
  return <div className="flex h-[57px] shrink-0 items-center border-b-4 border-[#acacac] bg-linear-to-b from-[#efefef] to-[#c8c8c8] pt-[2px] pl-3">{children}</div>;
}
function Mini({ children, c = "w-[60px]" }: Kids & { c?: string }) {
  return <div className={`flex shrink-0 items-center ${c}`}><Ico c="size-8">{children}</Ico></div>;
}
const Tri = ({ on = true }) => (
  <svg viewBox="0 0 15 18" className="h-[18px] w-[15px] shrink-0">{on && <path d="M0 0l15 9-15 9z" fill="#8c8c8c" />}</svg>
);
const FolderI = ({ children }: Kids) => (<><path d="M3 4h16l5 7h20v34H3z" fill="#eee" stroke="#85857e" strokeWidth="3" />{children}</>);

const BROWSER: { t: string; w: number; tri: boolean; icon: React.ReactNode }[] = [
  { t: "Favorites", w: 109, tri: false, icon: <path d="M24 1l6 17h17L33 28l5 18-14-11-14 11 5-18L1 18h17z" fill="#fff56b" stroke="#d0a800" strokeWidth="2.400" /> },
  { t: "Project Home", w: 164, tri: true, icon: <><path d="M3 3h16l5 6h20v36H3z" fill="#b4e04a" stroke="#85857e" strokeWidth="3" /><path d="M5 14l37 29M6 34l14-20M20 44l6-14" stroke="#f4fbd0" strokeWidth="3" /><path d="M31 30l-9-12c0-9 18-9 18 0z" fill="#128a00" /></> },
  { t: "Home", w: 70, tri: true, icon: <FolderI><path d="M14 27l10-11 10 11h-3v11H17V27z" stroke="#333" strokeWidth="3" /></FolderI> },
  { t: "/", w: 9, tri: true, icon: <FolderI /> },
  { t: "/Volumes", w: 112, tri: true, icon: <FolderI /> },
  { t: "GeoPackage", w: 151, tri: false, icon: <GeoBox /> },
];

function Check({ on }: { on: boolean }) {
  return on ? (
    <span className="flex size-7 shrink-0 items-center justify-center rounded-md bg-[#3c97fd]">
      <svg viewBox="0 0 28 28" className="size-7" fill="none"><path d="M7 15l5 6 9-14" stroke="#fff" strokeWidth="3.200" strokeLinecap="round" strokeLinejoin="round" /></svg>
    </span>
  ) : (
    <span className="size-7 shrink-0 rounded-md border-[1.5px] border-[#b4b4b4] bg-white" />
  );
}

const LAYERS: { t: string; w: number; on?: boolean; sel?: boolean; off?: boolean; icon: React.ReactNode }[] = [
  { t: "Grenze_m", w: 128, off: true, icon: <path d="M0 25h48" stroke="#8db08a" strokeWidth="3" /> },
  { t: "Grenze", w: 93, off: true, icon: <path d="M0 25h48" stroke="#f7b3bd" strokeWidth="3" /> },
  { t: "Schweiz_Grenzen", w: 225, on: true, sel: true, icon: <><path d="M0 25h48" stroke="#e8b878" strokeWidth="3" /><Pencil a="#e0dc84" b="#c8c464" /></> },
  { t: "Schweiz_isoliert", w: 210, off: true, icon: <rect x="1" y="1" width="46" height="46" fill="#e5734b" stroke="#a04a2a" strokeWidth="2.400" /> },
  { t: "ASTRA_Bruecken", w: 225, off: true, icon: <circle cx="24" cy="24" r="7" fill="#cc2f2f" stroke="#333" strokeWidth="3" /> },
  { t: "DeutscheBrücken_Zust…", w: 323, off: true, icon: <circle cx="24" cy="24" r="7" fill="#b5a98c" stroke="#333" strokeWidth="3" /> },
  { t: "ne_10m_admin_0_count…", w: 320, on: true, icon: <rect x="1" y="1" width="46" height="46" fill="#91522d" stroke="#5a3018" strokeWidth="2.400" /> },
];

const Dot = ({ d }: { d: string }) => (
  <path d={d} stroke="#888" strokeWidth="3" fill="#f0f0ee" />
);

function LeftPanels() {
  return (
    <div className="flex w-[498px] shrink-0 flex-col border-r-2 border-[#8c8c8c] bg-[#ececec]">
      <Head t="Browser" w={82} />
      <MiniBar>
        <Mini><Dot d="M2 2h37v40H2z" /><Plus x={28} y={28} s={1.1} /></Mini>
        <Mini><Refresh /></Mini>
        <Mini><Funnel /></Mini>
        <Mini><CollapseI /></Mini>
        <Mini><Info x={24} y={24} r={20} /></Mini>
      </MiniBar>
      <div className="flex h-[242px] shrink-0 flex-col border border-[#9a9a9a] bg-white">
        {BROWSER.map((b) => (
          <div key={b.t} className="flex h-10 shrink-0 items-center pl-[16px] text-[26px] leading-none text-black">
            <Tri on={b.tri} />
            <Ico c="ml-5 size-8">{b.icon}</Ico>
            <div className="ml-3 flex"><Fit t={b.t} w={b.w} /></div>
          </div>
        ))}
      </div>
      <div className="h-[2px] shrink-0 bg-[#b4b4b4]" />
      <Head t="Layers" w={66} />
      <MiniBar>
        <Mini><path d="M3 42l14 4 14-10-12-10z" fill="#e33" /><path d="M6 8l17-2 6 14-16 8z" fill="#3f6fc0" /><path d="M3 20l18-7 8 13-20 12z" fill="#f5d040" /><path d="M18 26l13-8 8 13-13 13z" fill="#e0a050" stroke="#a8641c" strokeWidth="2" /><path d="M35 24L45 5" stroke="#c07820" strokeWidth="5" strokeLinecap="round" /></Mini>
        <Mini><Dot d="M2 28v16h18M8 22v16h16" /><path d="M18 8h22v28H14V12z" fill="#e8e8e8" stroke="#777" strokeWidth="3" /><path d="M24 30V6c0-6 8-6 8 0v22" stroke="#36587f" strokeWidth="3" /><Plus x={28} y={28} s={1.1} /></Mini>
        <div className="flex w-[60px] shrink-0 items-center"><Ico c="size-8"><Eye /></Ico><Caret c="-ml-[8px] mt-[32px]" /></div>
        <Mini><Funnel /></Mini>
        <div className="ml-[10px] flex w-[65px] shrink-0 items-center">
          <Ico c="size-8"><text x="0" y="32" fontSize="54" fill="#5a3070" fontFamily="Liberation Serif, serif">ε</text><path d="M23 26h22v21H23z" fill="#999" /><path d="M26 29h16l-5 8v10h-6V37z" fill="#eee" /></Ico>
          <Caret c="ml-[1px] mt-3 scale-75" />
        </div>
        <div className="flex pl-[3px]"><Mini><ExpandI /></Mini><Mini><CollapseI /></Mini><Mini c="w-8"><Dot d="M2 2h37v40H2z" /><rect x="26" y="31" width="20" height="16" rx="4" fill="#e84c4c" /><path d="M30 39h12" stroke="#fff" strokeWidth="4" /></Mini></div>
      </MiniBar>
      <div className="flex h-[556px] shrink-0 flex-col border border-t-[2px] border-[#9a9a9a] bg-white">
        {LAYERS.map((l) => (
          <div key={l.t} className={`flex h-11 shrink-0 items-center pl-[55px] text-[26px] leading-none font-bold ${l.sel ? "bg-[#d4d4d4]" : ""}`}>
            <Check on={!!l.on} />
            <Ico c="ml-[26px] size-8">{l.icon}</Ico>
            <div className="ml-[13px] flex pb-[2px]"><Fit t={l.t} w={l.w} c={l.off ? "text-[#a0a0a4] italic" : l.sel ? "text-black underline decoration-2 underline-offset-[5px]" : "text-black"} /></div>
          </div>
        ))}
      </div>
      <div className="h-[2px] shrink-0 bg-[#a4a4a4]" />
      <Head t="Zoom to Lat Lon" w={167} />
      <div className="flex flex-1 flex-col border-t border-[#cfcfcf] pt-6 pl-[25px]">
        <div className="flex items-center text-[26px] leading-none text-black">
          <div className="-ml-[2px] flex"><Fit t="Enter 'Latitude, Longitude'" w={321} /></div>
          <span className="ml-[11px] flex h-[52px] w-[52px] items-center justify-center border-2 border-[#acacac] bg-linear-to-b from-[#e4e4e4] to-[#f8f8f8]"><Ico c="size-8"><Lens body={<path d="M29 8v21M18 18.500h22" stroke="#5b8cc5" strokeWidth="5" />} /></Ico></span>
          <span className="ml-[10px] flex h-[52px] w-[52px] items-center justify-center border-2 border-[#acacac] bg-linear-to-b from-[#e4e4e4] to-[#f8f8f8]"><svg viewBox="0 0 26 20" className="h-5 w-[26px]" fill="none"><path d="M0 10L6 0h20v20H6z" fill="#8e8e8e" /><path d="M10 5l10 10M20 5L10 15" stroke="#fff" strokeWidth="2" /></svg></span>
        </div>
        <div className="mt-[21px] h-10 w-[446px] border-2 border-[#b4b4b4] bg-white" />
      </div>
    </div>
  );
}

/* ---------- map ---------- */
const BORDER_N = "675.500,207 672,211 662,223 659,238 658.500,247 652,261 646.500,274 649,286 650,294 647,302.500 639,308 635,312 635,321 631,345 634,360 636,374 637,384 628,394 623.500,403 625,421 627,429 633,431 642,446 649.300,457.300";
const BORDER_S = "656,0 668,60 674,80 682,97 688,120 690,160 684,216";
const SWISS = "5,611 9,607 14,596 20,587 29,581 38,586 44,596 50,608 79,619 135,594 162,607 178,630 192,635 222,628 203,748 209,818 234,855 267,881 271,890 279,920 289,931 297,925 338,880 368,863 448,871 480,839 501,768 505,724 503,702 494,672 489,648 488,620 501,610 518,625 534,649 548,655 567,611 570,590 569,575 561,548 558,528 559,515 567,506 579,512 587,504 592,480 591,439 588,438 566,399 616,296 643,258 684,218 741,176 767,169 752,275 740,304 711,304 769,381 794,390 889,341 910,311 928,256 949,175 965,195 1038,205 1045,222 1048,260 1051,305 1054,321 1201,321 1252,293 1264,273 1274,232 1284,202 1292,187 1317,154 1338,138 1345,120 1350,99 1357,87 1418,61 1440,61 1468,83 1481,86 1488,108 1494,150 1502,187 1513,206 1558,236";

function MapView() {
  return (
    <div className="relative w-[1315px] shrink-0 overflow-hidden border-y-2 border-r-4 border-l-2 border-[#d8d8d8] border-r-[#b8b8b8] bg-[#91522d]">
      <svg viewBox="0 0 1309 1206" className="h-[1206px] w-[1309px]" fill="none">
        <g transform="translate(-644 -380) scale(1.8367)" stroke="#262626" strokeWidth="1.100"><polyline points={BORDER_N} /></g>
        <g transform="translate(-4 460) scale(.84184 .33333)">
          <polyline points={BORDER_S} stroke="#262626" strokeWidth="2" vectorEffect="non-scaling-stroke" />
          <g stroke="#f6a013" strokeWidth="1.800">
            <polyline points={SWISS} vectorEffect="non-scaling-stroke" />
            <polyline points="5,1157 22,1136 45,1183 56,1210 68,1252 60,1297 49,1316 36,1325 26,1340 11,1393 5,1403" vectorEffect="non-scaling-stroke" />
            <polyline points="5,757 8,775 5,793" vectorEffect="non-scaling-stroke" />
          </g>
        </g>
      </svg>
    </div>
  );
}

/* ---------- processing toolbox ---------- */
const GROUPS: [string, number][] = [
  ["Recently used", 171], ["Cartography", 151], ["Database", 113], ["File tools", 107], ["Graphics", 108], ["Interpolation", 152],
  ["Layer tools", 132], ["Network analysis", 205], ["Raster analysis", 181], ["Raster terrain analysis", 268], ["Raster tools", 146],
  ["Vector analysis", 185], ["Vector creation", 187], ["Vector general", 180], ["Vector geometry", 204], ["Vector overlay", 175],
  ["Vector selection", 197], ["Vector table", 147], ["GDAL", 67], ["GRASS", 85], ["Lat Lon tools", 155], ["SAGA", 68],
];
function groupIcon(t: string) {
  switch (t) {
    case "Recently used":
      return <Clock />;
    case "GDAL":
      return (<>
        <circle cx="29" cy="31" r="18" fill="#6cc3ea" /><path d="M20 18l14-3 6 8-8 6-6-2zM34 34l8 2-4 10z" fill="#2f8a4a" /><path d="M2 14L24 2" stroke="#555" strokeWidth="6" /><circle cx="13" cy="8" r="5" fill="#111" />
        <text x="0" y="47" fontSize="20" fontWeight="700" fill="#000" textLength="46" lengthAdjust="spacingAndGlyphs" fontFamily="Open Sans, sans-serif">GDAL</text>
      </>);
    case "GRASS":
      return (<><path d="M24 1l19 20-19 20L5 21z" fill="#fff" stroke="#222" strokeWidth="2" /><path d="M24 38c-1-10-8-14-12-18M24 38c0-10 6-15 9-22M23 38c1-12-2-18-4-26M24 38c3-6 10-9 14-14" stroke="#1c9a1c" strokeWidth="2.600" /><path d="M5 26l19 20 19-20M8 46h32" stroke="#111" strokeWidth="2.400" /></>);
    case "Lat Lon tools":
      return <DocPair />;
    case "SAGA":
      return <path d="M40 9A21 21 0 1 0 45 27H18l17 15M6 22l8-1 8-9 9 15M38 3v9H27" stroke="#1b5fa8" strokeWidth="5.500" />;
    default:
      return <QLogo id={`q${t.replace(/ /g, "")}`} />;
  }
}
const SearchI = ({ c = "#8a8a8a" }) => (
  <svg viewBox="0 0 26 26" className="mb-1 size-[26px] shrink-0" fill="none"><circle cx="10.500" cy="10.500" r="9" stroke={c} strokeWidth="2" /><path d="M17 17l8 8" stroke={c} strokeWidth="3" /></svg>
);
const DotSep = () => <span className="h-11 w-0 shrink-0 border-l-[3px] border-dotted border-[#888]" />;

function Processing() {
  return (
    <div className="flex flex-1 flex-col bg-[#ececec]">
      <Head t="Processing Toolbox" w={203} />
      <MiniBar>
        <div className="-ml-[1px] flex w-[60px] items-center"><Ico c="size-8"><polygon points={gear(15, 14, 14, 8, 8)} fill="#d01818" /><polygon points={gear(36, 24, 11, 7, 8)} fill="#777" /><polygon points={gear(23, 38, 9, 6, 8)} fill="#7fa5da" /><circle cx="15" cy="14" r="3" fill="#fff" /><circle cx="36" cy="24" r="3" fill="#ddd" /><circle cx="23" cy="38" r="2.500" fill="#ddd" /></Ico><Caret c="-ml-[10px] mt-[30px]" /></div>
        <div className="flex w-[60px] items-center"><Ico c="size-8"><Python /></Ico><Caret c="-ml-[9px] mt-[30px]" /></div>
        <Mini><Clock /></Mini>
        <Mini c="w-[58px]"><Paper><path d="M13 16h12M13 24h22M13 31h22M13 39h16" stroke="#444" strokeWidth="3" /></Paper></Mini>
        <DotSep />
        <div className="ml-[22px] flex w-[55px]"><Ico c="size-8"><path d="M2 3h31v30H2z" fill="#ffe94d" stroke="#c4a000" strokeWidth="2.500" /><g transform="translate(12 8) scale(.85)"><Pencil x={2} /></g></Ico></div>
        <DotSep />
        <div className="ml-6 flex"><Ico c="size-8"><Wrench /></Ico></div>
      </MiniBar>
      <div className="mr-[2px] flex h-[41px] shrink-0 items-center border-2 border-[#b4b4b4] bg-white pl-[14px] text-[26px] leading-none text-[#868686]">
        <SearchI /><div className="ml-3 flex pt-[2px]"><Fit t="Search…" w={103} /></div>
      </div>
      <div className="flex flex-1 flex-col border-2 border-t-[2px] border-[#a6a6a6] bg-white">
        {GROUPS.map(([t, w]) => (
          <div key={t} className="flex h-10 shrink-0 items-center pl-[14px] text-[26px] leading-none text-black">
            <Tri /><Ico c="ml-5 size-8">{groupIcon(t)}</Ico>
            <div className="ml-[13px] flex"><Fit t={t} w={w} /></div>
          </div>
        ))}
      </div>
    </div>
  );
}

/* ---------- status bar ---------- */
const Stepper = ({ c = "" }) => (
  <span className={`flex h-[41px] w-[23px] shrink-0 flex-col items-center justify-center rounded-xl border border-[#bbb] bg-white ${c}`}>
    <svg viewBox="0 0 12 30" className="h-[30px] w-3" fill="none"><path d="M1.500 8L6 2.500 10.500 8M1.500 22L6 27.500 10.500 22" stroke="#333" strokeWidth="2.600" /></svg>
  </span>
);
function StatusBar() {
  return (
    <div className="flex h-[89px] shrink-0 items-center border-t-2 border-[#7a7a7a] bg-linear-to-b from-[#ebebeb] to-[#b0b0b0] pb-[2px] pl-[9px] text-[23px] leading-none text-black">
      <div className="flex h-10 w-[436px] shrink-0 items-center border-2 border-[#a8a8a8] bg-white pl-[14px] text-[26px] text-[#7d7d7d]">
        <SearchI /><div className="ml-[12px] flex pt-[2px]"><Fit t="Type to locate (⌘K)" w={240} /></div>
      </div>
      <div className="ml-[17px] flex"><Fit t="0 feature(s) selected on layer ne_10m_admin_0_cou" w={525} /></div>
      <div className="ml-[17px] flex"><Fit t="Coordinate" w={112} /></div>
      <div className="ml-[7px] flex h-10 w-[214px] shrink-0 items-center border-2 border-[#a0a0a0] bg-white pl-[13px]"><Fit t="793813,6007999" w={177} /></div>
      <span className="ml-[2px] flex size-[51px] shrink-0 items-center justify-center border-2 border-[#acacac] bg-[#ececec]">
        <Ico c="size-8"><path d="M8 5c7-6 15 2 15 16l-9 8C5 24 2 11 8 5z" fill="#fff" stroke="#000" strokeWidth="4" /><path d="M15 7c4 5 4 10 1 14" stroke="#000" strokeWidth="6" /><path d="M23 21c11 0 17 14 9 22-10 5-18-2-19-14" fill="#fff" stroke="#000" strokeWidth="4" /><circle cx="25" cy="34" r="4" stroke="#000" strokeWidth="3" /><path d="M33 8h3M38 13h3M42 3h3M3 32h3M8 37h3" stroke="#000" strokeWidth="3" /></Ico>
      </span>
      <div className="ml-[19px] flex"><Fit t="Scale" w={55} /></div>
      <div className="ml-[8px] flex h-10 w-[208px] shrink-0 items-center">
        <div className="flex h-10 flex-1 items-center border-2 border-r-0 border-[#a8a8a8] bg-white pb-1 pl-[6px]"><Fit t="1:1319604" w={105} /></div>
        <div className="flex h-10 w-[35px] items-center justify-center rounded-r-lg bg-linear-to-b from-[#6cb3fb] to-[#0b79fe]"><svg viewBox="0 0 16 10" className="h-[10px] w-4" fill="none"><path d="M1.500 1.500L8 8l6.500-6.500" stroke="#fff" strokeWidth="3" /></svg></div>
      </div>
      <span className="ml-[24px] flex size-[51px] shrink-0 items-center justify-center border-2 border-[#acacac] bg-linear-to-b from-[#e2e2e2] to-[#f2f2f2]">
        <svg viewBox="0 0 26 32" className="h-8 w-[26px]" fill="none"><path d="M5 16V9c0-10 16-10 16 0v7" stroke="#8a8a82" strokeWidth="3.400" /><rect x="1" y="15" width="24" height="16" rx="2" fill="#666" /></svg>
      </span>
      <div className="ml-[6px] flex"><Fit t="Magnifier" w={96} /></div>
      <div className="ml-[8px] flex h-[36px] w-[148px] shrink-0 items-center border-2 border-[#a0a0a0] bg-white pl-[1px]"><Fit t="100%" w={55} /></div>
      <Stepper c="ml-[5px]" />
      <div className="ml-[22px] flex"><Fit t="Rotation" w={84} /></div>
      <div className="ml-[20px] flex h-[34px] w-[144px] shrink-0 items-center border-2 border-[#a0a0a0] bg-white pl-[1px]"><Fit t="0.0 °" w={47} /></div>
      <Stepper c="ml-[6px]" />
      <div className="ml-[15px] flex"><Check on /></div>
      <div className="ml-[7px] flex"><Fit t="Render" w={72} /></div>
      <div className="ml-[4px] flex h-[60px] w-[192px] shrink-0 items-center border-2 border-[#acacac] bg-linear-to-b from-[#e2e2e2] to-[#f2f2f2] pl-2">
        <Ico c="size-8"><path d="M12 4h24l12 20H0z" fill="#666" /><path d="M5 25c4 14 10 20 19 20s15-6 19-20z" fill="#eee" stroke="#666" strokeWidth="3" /><path d="M18 4l-6 20M30 4l6 20M24 4v20M6 14h36" stroke="#ddd" strokeWidth="2.400" /><path d="M24 25v20M9 34h30M15 25l5 18M33 25l-5 18" stroke="#666" strokeWidth="2.400" /></Ico>
        <div className="ml-[7px] flex"><Fit t="EPSG:3395" w={117} /></div>
      </div>
      <span className="ml-[12px] flex h-[60px] w-[52px] shrink-0 items-center justify-center border-2 border-[#acacac] bg-linear-to-b from-[#e2e2e2] to-[#f2f2f2]">
        <svg viewBox="0 0 34 32" className="h-8 w-[34px]"><path d="M17 1C7 1 1 7 1 14s6 13 16 13l4 0c3 3 6 4 10 4-2-2-3-4-3-7 3-3 5-6 5-10C33 7 27 1 17 1z" fill="#5f5f5f" /><circle cx="9" cy="14" r="2.400" fill="#fff" /><circle cx="17" cy="14" r="2.400" fill="#fff" /><circle cx="25" cy="14" r="2.400" fill="#fff" /></svg>
      </span>
      <svg viewBox="0 0 44 46" className="ml-[18px] mb-1 h-[46px] w-11 shrink-0"><path d="M2 16h10c-3-7 9-11 9 0h11v8c8-2 8 9 0 8v12H2V34c8 2 8-11 0-8z" fill="#9c9c9c" stroke="#666" strokeWidth="2" /><path d="M34 1l2 6 6 1-4 4 2 6-6-3-5 3 1-6-5-4 6-1z" fill="#fff" stroke="#777" strokeWidth="1.500" /></svg>
    </div>
  );
}

/* ---------- menu bar ---------- */
const MENUS: [string, number][] = [["Project", 91], ["Edit", 48], ["View", 62], ["Layer", 69], ["Settings", 106], ["Plugins", 94], ["Vector", 81], ["Raster", 83], ["Database", 121], ["Web", 57], ["MMQGIS", 114], ["Processing", 142], ["Window", 102], ["Help", 59]];
function MenuBar() {
  return (
    <div className="flex h-[46px] w-full items-center border-b-2 border-[#1b2432] bg-linear-to-r from-[#e3edf7] to-[#eff2f9] pl-[41px] text-[26.500px] leading-none text-[#2a323a]">
      <FaApple className="-mt-1 h-[32px] w-[28px] shrink-0" />
      <div className="ml-[38px] flex gap-[35.3px]">
        <Fit t="QGIS 3" w={95} c="font-bold" />
        {MENUS.map(([t, w]) => <Fit key={t} t={t} w={w} />)}
      </div>
      <div className="ml-[45px] flex flex-1 items-center">
        <svg viewBox="0 0 32 28" className="h-7 w-8 shrink-0"><path d="M8 0h16l8 9-16 19L0 9z" fill="#23262a" /></svg>
        <svg viewBox="0 0 34 34" className="ml-[19px] size-[34px] shrink-0" fill="none"><path d="M17 2a15 15 0 1 0 15 15M18 8a9.500 9.500 0 1 0 8 12M17 13a4 4 0 1 0 4 4" stroke="#b4bac4" strokeWidth="3.400" /></svg>
        <svg viewBox="0 0 36 30" className="ml-[28px] h-[30px] w-9 shrink-0" fill="none"><path d="M10 22H1.500V2h33v20H26" stroke="#2a323a" strokeWidth="2.600" /><path d="M18 15l10 14H8z" fill="#2a323a" /></svg>
        <FaBluetoothB className="ml-[31px] h-[30px] w-[24px] shrink-0" />
        <svg viewBox="0 0 40 28" className="ml-[28px] h-7 w-10 shrink-0" fill="none"><path d="M2 9.500C12-.5 28-.5 38 9.500M8 15.500c7-6.500 17-6.500 24 0M14 21.500c4-3.500 8-3.500 12 0" stroke="#2a323a" strokeWidth="3.400" /><circle cx="20" cy="25.500" r="2.500" fill="#2a323a" /></svg>
        <div className="ml-[23px] flex"><Fit t="100%" w={60} /></div>
        <svg viewBox="0 0 46 26" className="ml-[7px] h-[26px] w-[46px] shrink-0" fill="none"><rect x="1" y="1.500" width="38" height="23" rx="5" stroke="#2a323a" strokeWidth="2" /><path d="M43 9c2 1 2 7 0 8z" fill="#2a323a" stroke="#2a323a" /><path d="M4 5h32v16H4z" fill="#2a323a" /><path d="M23 2L13 14h6l-2 10 11-12h-7z" fill="#2a323a" stroke="#edf1f8" strokeWidth="2" /></svg>
        <svg viewBox="0 0 32 34" className="ml-[30px] h-[34px] w-8 shrink-0"><rect width="25" height="27" fill="#c3141c" /><path d="M10 5h5v6h6v5h-6v6h-5v-6H4v-5h6z" fill="#fff" /><path d="M14 22h18v4H14z" fill="#111" /><path d="M14 26h18v4H14z" fill="#d01818" /><path d="M14 30h18v4H14z" fill="#f2c030" /></svg>
        <div className="ml-[41px] flex"><Fit t="Thu 5:11 PM" w={155} /></div>
        <svg viewBox="0 0 28 28" className="ml-[50px] size-7 shrink-0" fill="none"><circle cx="11.500" cy="11" r="9.500" stroke="#2a323a" strokeWidth="2.400" /><path d="M18 18l9 9" stroke="#2a323a" strokeWidth="3" /></svg>
        <svg viewBox="0 0 36 20" className="ml-[31px] h-5 w-9 shrink-0" fill="none"><path d="M0 2h4M8 2h28M0 10h4M8 10h22M0 18h4M8 18h28" stroke="#2a323a" strokeWidth="3.400" /></svg>
      </div>
    </div>
  );
}

/* ---------- dock ---------- */
const Cnt = ({ t, x = 60, y = 20, w = 0 }: { t: string; x?: number; y?: number; w?: number }) => (
  <g><rect x={x - 14 - w} y={y - 14} width={28 + 2 * w} height="28" rx="14" fill="#ee5042" /><text x={x} y={y + 6} textAnchor="middle" fontSize="18" fill="#fff" fontFamily="Inter, sans-serif">{t}</text></g>
);
const Office = ({ l, a, b, children }: Kids & { l: string; a: string; b: string }) => (
  <><rect x="38" y="14" width="36" height="54" fill="#fbfbfb" stroke="#ddd" />{children}<path d="M6 13l40-8v71L6 67z" fill={a} /><path d="M6 13l40-8v30L6 50z" fill={b} opacity=".4" /><text x="25" y="50" textAnchor="middle" fontSize="29" fontWeight="700" fill="#fff" fontFamily="Open Sans, sans-serif">{l}</text></>
);
const FinderArt = () => (
  <>
    <defs><linearGradient id="fnd" x1="0" y1="0" x2="0" y2="1"><stop offset="0" stopColor="#5cd0fb" /><stop offset="1" stopColor="#2a6be8" /></linearGradient></defs>
    <rect x="8" y="10" width="64" height="60" rx="2" fill="url(#fnd)" /><path d="M42 10h28a2 2 0 0 1 2 2v56a2 2 0 0 1-2 2H46c-1-8-1-14-1-25H35c0-14 2-26 7-35z" fill="#eef3fa" />
    <path d="M26 25v7M54 25v7" stroke="#16283c" strokeWidth="3" /><path d="M21 49c10 11 27 11 38 0M42 10c-5 9-7 21-7 35h10c0 11 0 17 1 25" stroke="#16283c" strokeWidth="2.200" fill="none" />
  </>
);
const ExcelArt = () => (
  <Office l="X" a="#1e7145" b="#5aa57c">
    {[20, 29, 38, 47, 56].map((y, i) => <g key={y} fill={i ? "#5c9a7c" : "#333"}><rect x="47" y={y} width="10" height="6.500" /><rect x="59" y={y} width="10" height="6.500" /></g>)}
  </Office>
);
const LibreArt = () => (<><path d="M10 2h38l21 29v46H10z" fill="#f4f4f4" stroke="#333" strokeWidth="2.400" /><path d="M53 1h18v22z" fill="#555" /></>);

const DOCK: { n: string; run: boolean; art: React.ReactNode }[] = [
  { n: "finder", run: true, art: <FinderArt /> },
  { n: "code", run: true, art: <><path d="M10 12L60 3l4 62-44 9z" fill="#28282b" /><path d="M55 8l15 6 6 49-14 9z" fill="#4a9fe0" /><path d="M56 9l6 62" stroke="#2b72b8" strokeWidth="2" /><path d="M21 58l52 6-13 9z" fill="#2473b8" /><path d="M46 19l7 4v24l-8 4-14-14-6 5-4-3 16-20 4 3-14 16M46 19L22 44M46 28L36 36l10 9z" fill="#3a94dc" fillRule="evenodd" /></> },
  { n: "mail", run: true, art: <><path d="M9 14l49-10 11 60-49 10z" fill="#fff" stroke="#f4f4f4" strokeWidth="3" strokeDasharray="4 3" /><path d="M14 18l41-9 9 51-41 9z" fill="#3f86d8" /><path d="M17 40l46-9 5 28-46 9z" fill="#8fc0ee" /><path d="M20 20c7 4 10 14 15 20 10 2 18 10 22 15-8 0-14-4-20-8-6 4-10 8-14 7 2-6 4-10 6-14-6-6-9-12-9-20z" fill="#5a4020" /><path d="M24 52l10-6 3 3-8 8z" fill="#f0ead8" /><circle cx="60" cy="64" r="15" stroke="#555" strokeWidth="1.500" fill="none" opacity=".6" /><circle cx="60" cy="64" r="10" stroke="#555" fill="none" opacity=".6" /><Cnt t="220" x={63} y={18} w={3} /></> },
  { n: "chrome", run: true, art: <><circle cx="40" cy="40" r="36" fill="#f6cb4d" /><path d="M40 4a36 36 0 0 1 32 20H40L27 50 9 22A36 36 0 0 1 40 4z" fill="#db4a3c" /><path d="M9 22l17 28 14 8h12L38 76A36 36 0 0 1 9 22z" fill="#4ba462" /><circle cx="40" cy="40" r="16.500" fill="#fff" /><circle cx="40" cy="40" r="13" fill="#4c84ee" /></> },
  { n: "terminal", run: true, art: <><rect x="7" y="11" width="66" height="58" rx="3" fill="#000" stroke="#777" /><rect x="11" y="15" width="58" height="50" fill="#2c2c2c" /><path d="M15 20l8 4.500-8 4.500M25 32h9" stroke="#fff" strokeWidth="2.600" fill="none" /></> },
  { n: "rocket", run: false, art: <><circle cx="40" cy="40" r="34" fill="#a8adb1" stroke="#e3e6e8" strokeWidth="2" /><path d="M6 40a34 34 0 0 1 68 0z" fill="#c3ccd2" /><path d="M60 19c-14 2-22 10-28 20l-10 4-2 6 10-1 6 6-1 11 6-2 4-12c10-7 15-18 15-32zM25 54c-6 1-6 6-6 10 5-1 9-3 10-7z" fill="#3d4248" /><circle cx="48" cy="33" r="4.500" fill="#c3ccd2" /></> },
  { n: "contacts", run: false, art: <><path d="M54 12l10-2 6 50-9 3z" fill="#eee" /><path d="M63 24l5-1 2 12-5 1z" fill="#5ab4e8" /><path d="M65 37l5-1 1 12-5 1z" fill="#6c6" /><path d="M66 50l6-1 1 11-6 1z" fill="#f2a030" /><path d="M10 11l46-7c3 0 5 1 5 4l7 56c0 3-1 5-4 6l-44 5z" fill="#bd9650" /><path d="M10 11l6-1 9 64-5 1z" fill="#a27c3a" /><circle cx="40" cy="38" r="16" fill="#b08944" stroke="#93702f" strokeWidth="1.500" /><path d="M29 48c0-6 8-5 6-12 0-8 9-8 9 0-1 7 8 6 8 12-6 7-18 7-23 0z" fill="#9a7633" /></> },
  { n: "store", run: true, art: <><circle cx="40" cy="40" r="33" fill="#2f86f2" stroke="#e4e8ee" strokeWidth="2.500" /><path d="M8 35a33 33 0 0 1 64 0z" fill="#4fb0f8" opacity=".7" /><path d="M36 20l19 36M44 20L28 48M18 47h21M49 47h13M23 56l-3 6" stroke="#fff" strokeWidth="6" strokeLinecap="round" /><Cnt t="2" x={65} y={18} /></> },
  { n: "prefs", run: true, art: <><rect x="6" y="9" width="68" height="63" rx="3" fill="#a2aab0" stroke="#7c8388" /><rect x="6" y="9" width="68" height="25" fill="#c4ced4" opacity=".7" /><circle cx="40" cy="40" r="29" fill="#2c2c2c" /><polygon points={gear(40, 40, 25, 21, 28)} fill="#c4c4c4" /><circle cx="40" cy="40" r="16" fill="#444" /><path d="M40 40L24 30M40 40l18-1M40 40l-9 17" stroke="#bbb" strokeWidth="5" /><circle cx="40" cy="40" r="6" fill="#aaa" /><Cnt t="1" x={65} y={18} /></> },
  { n: "skype", run: false, art: <><circle cx="25" cy="24" r="21" fill="#2b72a9" /><circle cx="55" cy="57" r="20" fill="#2b72a9" /><circle cx="40" cy="40" r="33" fill="#2b72a9" /><circle cx="26" cy="26" r="16" fill="#fff" /><circle cx="54" cy="55" r="15" fill="#fff" /><circle cx="40" cy="40" r="28" fill="#fff" /><text x="40" y="58" textAnchor="middle" fontSize="50" fontWeight="800" fill="#2b72a9" fontFamily="Open Sans, sans-serif">S</text></> },
  { n: "sketch", run: false, art: <><path d="M18 8l22-3 22 3 15 22-37 46L3 30z" fill="#f5a623" /><path d="M18 8l22-3 22 3-4 22H22z" fill="#fbc94a" /><path d="M40 5l20 25H20z" fill="#fde08a" /><path d="M3 30h19l18 46z" fill="#e57a1e" /><path d="M77 30H58L40 76z" fill="#d9701c" /><path d="M22 30h36L40 76z" fill="#f5a832" /></> },
  { n: "github", run: true, art: <><circle cx="40" cy="40" r="34.500" fill="#eeeefa" /><path d="M20 18c5 0 9 2 12 4 5-1 11-1 16 0 3-2 7-4 12-4 2 4 1 7 0 10 5 8 4 22-8 26-3 1-3 3-3 6v14c-6 2-13 2-18 0v-9c-8 2-11-3-13-7s-4-5-3-7c6 0 7 9 16 8v-3c-13-4-16-18-10-28-2-3-2-6-1-10z" fill="#47297a" /><path d="M31 62h18v12c-6 2-13 2-18 0z" fill="#7a2a88" /></> },
  { n: "keys", run: true, art: <><path d="M47 28h12l7 12-3 14-12 2z" fill="#c4cdd2" stroke="#8f9294" /><path d="M54 44l8 27M42 44l2 30M32 44l-9 27" stroke="#77797b" strokeWidth="8" /><path d="M54 44l8 26M42 44l2 29M32 44l-9 26" stroke="#a9adaf" strokeWidth="5" /><circle cx="45" cy="16" r="12" stroke="#8a8a8a" strokeWidth="3" fill="none" /><circle cx="28" cy="33" r="17" fill="#f08a24" stroke="#d8d8d8" strokeWidth="2" /><circle cx="32" cy="22" r="3" fill="#fff" /><rect x="20" y="34" width="14" height="9" fill="#fff" /><path d="M29 34v-5c0-4 7-4 7 0" stroke="#fff" strokeWidth="2" fill="none" /></> },
  { n: "word", run: true, art: <Office l="W" a="#2a5699" b="#6c92cc">{[20, 28, 36, 44, 52, 60].map((y, i) => <path key={y} d={`M44 ${y}h${i % 2 ? 24 : 22}`} stroke={i % 2 ? "#5a7fc0" : "#444"} strokeWidth="3" />)}</Office> },
  { n: "glyphs", run: false, art: <><rect x="1" y="0" width="78" height="80" fill="#1c1c1e" /><text x="27" y="50" textAnchor="middle" fontSize="50" fontStyle="italic" fill="#fff" fontFamily="Liberation Serif, serif">G</text><text x="57" y="60" textAnchor="middle" fontSize="52" fontStyle="italic" fill="#fff" fontFamily="Liberation Serif, serif">φ</text><path d="M22 12C6 16 4 32 14 34M14 46c-6 14 6 24 20 18 14-8 20-28 28-36M40 12c12-8 18-2 14 8-4 8-14 10-26 8" stroke="#fff" strokeWidth="1.800" fill="none" /></> },
  { n: "libre", run: true, art: <LibreArt /> },
  { n: "text", run: true, art: <><path d="M10 14l50-11 10 62-52 11z" fill="#fbfbf6" stroke="#ccc" />{[0, 1, 2, 3, 4, 5, 6, 7].map((i) => <path key={i} d={`M${14 + i} ${22 + i * 6.5}l44-9`} stroke="#bcc4cc" strokeWidth="1.400" />)}<path d="M69 4L52 74" stroke="#8fa3b6" strokeWidth="5" /><path d="M70 4L54 66" stroke="#dfe8ef" strokeWidth="2" /></> },
  { n: "firefox", run: true, art: <><circle cx="40" cy="42" r="35" fill="#e8372f" /><circle cx="40" cy="38" r="27" fill="#2a73d8" /><path d="M53 2c-7 12-2 22 3 30s-4 26-17 25c-8 0-14-4-16-10 6 2 9-1 14-4-4-4-10-3-11-7 0-4 5-5 4-9-5 0-9-3-12-8-8 4-14 14-13 26 2 20 18 31 36 31 20 0 35-16 34-36-1-16-8-22-14-25-5-3-8-7-8-13z" fill="#fb9a2c" /><path d="M53 2c-7 12-2 22 5 30 8 12 2 28-8 34 16-2 26-14 25-28-1-14-8-18-14-22-5-4-8-8-8-14z" fill="#fde04e" /><path d="M6 38C6 26 8 18 14 10c0 6 2 8 4 10C8 32 8 54 28 66c-14-2-21-14-22-28z" fill="#e2353c" /></> },
  { n: "spotify", run: true, art: <><circle cx="40" cy="40" r="34" fill="#62d56b" /><path d="M17 28c15-5 33-3 47 5M19 40c13-4 28-2 40 5M21 52c11-3 23-2 34 4" stroke="#16181a" strokeWidth="6" strokeLinecap="round" fill="none" /></> },
  { n: "calendar", run: true, art: <><path d="M7 19l5 55 58-9-8-50z" fill="#4a545c" /><path d="M9 18l52-11 8 51-53 10z" fill="#f6f6f6" /><path d="M9 18l52-11 2 13-52 12z" fill="#d9483c" /><text x="34" y="24" transform="rotate(-10 34 20)" textAnchor="middle" fontSize="13" fill="#fff" fontFamily="Inter, sans-serif">FEB</text><text x="40" y="58" transform="rotate(-9 40 46)" textAnchor="middle" fontSize="33" fill="#222" fontFamily="Inter, sans-serif" fontWeight="300">14</text><Cnt t="3" x={65} y={18} /></> },
  { n: "excel", run: true, art: <ExcelArt /> },
  { n: "markdown", run: true, art: <><circle cx="40" cy="40" r="33" fill="#4aa6d4" stroke="#fff" strokeWidth="2.500" /><path d="M8 33a33 33 0 0 1 64 0z" fill="#64cfd8" opacity=".7" /><path d="M21 49V31l9 10 9-10v18M55 30v14" stroke="#fff" strokeWidth="6" fill="none" /><path d="M46 40h18l-9 11z" fill="#fff" /></> },
  { n: "qgis", run: true, art: <g transform="translate(1 1) scale(1.610)"><QLogo id="qdock" /></g> },
  { n: "ppt", run: true, art: <Office l="P" a="#c9472b" b="#f08a70"><circle cx="57" cy="30" r="11" fill="#333" /><path d="M58 28V17a11 11 0 0 1 10 11z" fill="#d0604a" /><path d="M48 49h22M48 56h22" stroke="#d0604a" strokeWidth="3" /></Office> },
  { n: "pdf", run: true, art: <><path d="M12 30h16V10h18l16 20v50H12zM26 12v14H15z" fill="#43a08a" /><rect x="44" y="12" width="22" height="20" rx="2" fill="#43a08a" /><path d="M48 12V8c0-10 14-8 14 0" stroke="#43a08a" strokeWidth="4" fill="none" /><circle cx="55" cy="20" r="2.600" fill="#eee" /><path d="M55 20v8" stroke="#eee" strokeWidth="3" /><path d="M21 70c12-8 16-20 15-33 2 16 8 24 20 26-10-4-24 0-35 7z" stroke="#f2b070" strokeWidth="2.600" fill="none" /></> },
];

function Thumb({ kind }: { kind: number }) {
  if (kind === 1)
    return (
      <svg viewBox="0 0 80 80" className="size-20">
        <rect x="3" y="4" width="73" height="72" fill="#fdfdfd" /><rect x="3" y="10" width="28" height="66" fill="#e6e6e8" /><path d="M6 16h8M6 22h7M6 28h9M6 38h12M6 46h8M6 54h10M6 62h8" stroke="#777" strokeWidth="1.200" /><path d="M34 12h10M34 16h16M34 20h12M34 24h14M52 12h8M52 16h10" stroke="#6a94b8" strokeWidth="1.200" />
        <g transform="translate(48 49) scale(.38)"><FinderArt /></g>
      </svg>
    );
  const top = kind === 5 ? 16 : 20;
  return (
    <svg viewBox="0 0 80 80" className="size-20">
      <rect x="3" y={top} width="74" height={61 - top} fill="#fcfcfc" stroke="#e0e0e0" /><path d={`M3 ${top + 1}h74`} stroke={kind === 3 ? "#ccc" : "#257a50"} strokeWidth="2" />
      <path d={`M3 ${top + 4}h74M4 ${top + 8}h72`} stroke="#d4d4d4" strokeWidth="2.500" strokeDasharray="5 2" />
      <path d="M12 34h64M12 42h64M12 50h64M22 31v28M36 31v28M50 31v28M64 31v28" stroke="#eee" />
      {kind === 0 && <><path d="M8 31v20M25 31v20" stroke="#999" strokeWidth="3" strokeDasharray="1 1" /><path d="M5 43h25" stroke="#e8e04a" strokeWidth="1.500" /></>}
      {kind === 2 && <path d="M5 34h42" stroke="#888" strokeWidth="2" strokeDasharray="3 1" />}
      {kind === 3 && <path d="M10 31v14M22 31v10M30 31v8M38 31v12M46 31v10M54 31v12M62 31v10M70 31v12" stroke="#aaa" strokeWidth="1.400" />}
      {kind === 4 && <path d="M9 31v16" stroke="#888" strokeWidth="9" strokeDasharray="1 .6" />}
      {kind === 5 && <><path d="M6 30h68" stroke="#999" strokeWidth="2" strokeDasharray="2 4" /><path d="M9 40v16" stroke="#888" strokeWidth="9" strokeDasharray="1 .6" /></>}
      <g transform="translate(47 49) scale(.38)">{kind === 3 ? <LibreArt /> : <ExcelArt />}</g>
    </svg>
  );
}

function Dock() {
  return (
    <div className="absolute top-[1700px] left-[64px] flex h-[100px] w-[2752px] overflow-hidden rounded-t-xl bg-linear-to-r from-[#8b7068] via-[#cfa07c] to-[#b5936b] pl-[6px]">
      <div className="absolute inset-0 bg-[radial-gradient(ellipse_560px_110px_at_75%_100%,#ef9c50_0%,transparent_100%),radial-gradient(ellipse_460px_120px_at_22%_70%,#c29485_0%,transparent_100%)]" />
      <div className="relative flex">
        {DOCK.map((d) => (
          <div key={d.n} className="flex w-[81.9px] shrink-0 flex-col items-center pt-[7px]">
            <svg viewBox="0 0 80 80" className="size-20 shrink-0" fill="none">{d.art}</svg>
            {d.run && <span className="mt-[1px] size-2 rounded-full bg-[#3c1204]" />}
          </div>
        ))}
        <div className="flex w-[36px] items-center justify-center"><span className="h-[72px] w-[2px] bg-[#a8703c]" /></div>
        {[0, 1, 2, 3, 4, 5, 6].map((k) => (
          <div key={k} className="flex w-[82px] shrink-0 justify-center pt-[7px]"><Thumb kind={k} /></div>
        ))}
        <div className="flex w-[82px] justify-center pt-[7px]">
          <svg viewBox="0 0 80 80" className="size-20" fill="none">
            <path d="M13 12c4-4 8-4 12-9l8 5 10-5 10 6 12 5v8H13z" fill="#e9e9e9" /><path d="M22 12l8-4 4 9zM42 14l8-6 5 10z" fill="#3a4a68" /><path d="M30 12l8 2-4 6z" fill="#3fb0e0" />
            <path d="M12 14c6 6 50 6 56 0l-7 56c-3 7-38 7-42 0z" fill="#dcdfe1" /><path d="M20 20l6 50M58 20l-4 50M36 22l2 52" stroke="#ededed" strokeWidth="5" opacity=".8" /><ellipse cx="40" cy="14" rx="28" ry="6" stroke="#f8f8f8" strokeWidth="2" />
          </svg>
        </div>
      </div>
    </div>
  );
}

/* ---------- desktop behind the main window ---------- */
const PEEK = ["V", "T", "T", "T", "Y", "E", "T", "T", "T", "T", "C", "L", "C", "F"];
function Desktop() {
  return (
    <>
      <div className="absolute top-[1600px] left-0 h-[56px] w-[120px] rounded-bl-lg border-t-2 border-[#b8b8b8] bg-linear-to-b from-[#e4e4e4] to-[#b4b4b4] pt-3 pl-[48px] text-[24px] text-[#666]">S</div>
      <div className="absolute top-[46px] left-0 flex h-[1552px] w-[56px] flex-col overflow-hidden rounded-tl-xl rounded-bl-xl bg-[#121212] text-[26px] leading-none text-[#8a8a8a]">
        <span className="mt-9 ml-[38px] size-6 shrink-0 rounded-full bg-[#cfcfcf]" />
        <span className="mt-[84px] ml-[49px] h-6 shrink-0 text-[#5a5a5a]">F</span>
        <span className="mt-[72px] ml-[49px] h-6 shrink-0">F</span>
        <span className="mt-[24px] ml-[47px] h-6 shrink-0">S</span>
        <div className="mt-[37px] flex shrink-0 flex-col">
          {PEEK.map((p, i) => <span key={i} className="ml-[48px] h-16 w-8">{p}</span>)}
        </div>
        <div className="-mt-[1px] h-[2px] shrink-0 bg-[#2c2c2c]" />
        <span className="mt-[44px] ml-[48px] size-[34px] shrink-0 rounded-full border-2 border-[#999]" />
        <div className="mt-auto h-[174px] shrink-0 bg-[#262626] pt-8 pl-8"><div className="h-[112px] w-8 bg-linear-to-b from-[#1f3524] via-[#6a7a80] to-[#4a6236]" /></div>
      </div>
      <div className="absolute top-[1656px] left-0 h-[144px] w-[224px] bg-[repeating-linear-gradient(178deg,#4a2f24_0px,#5d3f31_4px,#352018_9px,#4a2f24_13px)]" />
      <div className="absolute top-[1730px] left-[2800px] h-[70px] w-[80px] bg-[repeating-linear-gradient(181deg,#5c4012_0px,#7c5416_5px,#3a3010_9px,#5c4012_14px)]" />
      <div className="absolute top-[1660px] left-[224px] flex h-[70px] w-[2656px] bg-linear-to-b from-[#707070] via-[#7c7c7c] to-[#a6a6a6] text-[26px] leading-none">
        <div className="h-full w-[402px] border-r-2 border-[#757575]" />
        <div className="flex h-full w-[801px] justify-between border-r-2 border-[#6c6c6c] pt-[31px] pr-[18px] pl-[47px]">
          <Fit t="NZZ am Morgen" w={189} c="font-bold text-[#222]" />
          <Fit t="2/6/19" w={70} c="text-[#444]" />
        </div>
        <div className="ml-auto h-full w-[90px] bg-linear-to-r from-transparent to-[#d4d4d4]" />
      </div>
    </>
  );
}

export default function App() {
  return (
    <div className="relative h-[1800px] w-[2880px] overflow-hidden bg-[#5a6f88] font-[Inter,'Noto_Sans',sans-serif]">
      <Desktop />
      <MenuBar />
      <div className="absolute top-[46px] left-[54px] flex h-[1631px] w-[2825px] flex-col overflow-hidden rounded-xl bg-[#ececec] shadow-[0_14px_40px_rgba(0,0,0,0.55)]">
        <div className="flex h-[44px] shrink-0 items-center border-b-2 border-[#b0acaf] bg-linear-to-b from-[#ebe7ea] to-[#d3cfd2] pl-4">
          <span className="size-6 rounded-full border border-[#d5554a] bg-[#ed6b5f]" />
          <span className="ml-4 size-6 rounded-full border border-[#dca33c] bg-[#f5be4f]" />
          <span className="ml-4 size-6 rounded-full border border-[#4ca73d] bg-[#61c454]" />
          <div className="ml-[1199px] flex pt-1 text-[25.500px] leading-none text-[#363636]"><Fit t="*project - QGIS" w={184} /></div>
        </div>
        <Toolbars />
        <div className="flex h-[1210px] shrink-0">
          <SideBar />
          <LeftPanels />
          <MapView />
          <Processing />
        </div>
        <StatusBar />
      </div>
      <Dock />
    </div>
  );
}
